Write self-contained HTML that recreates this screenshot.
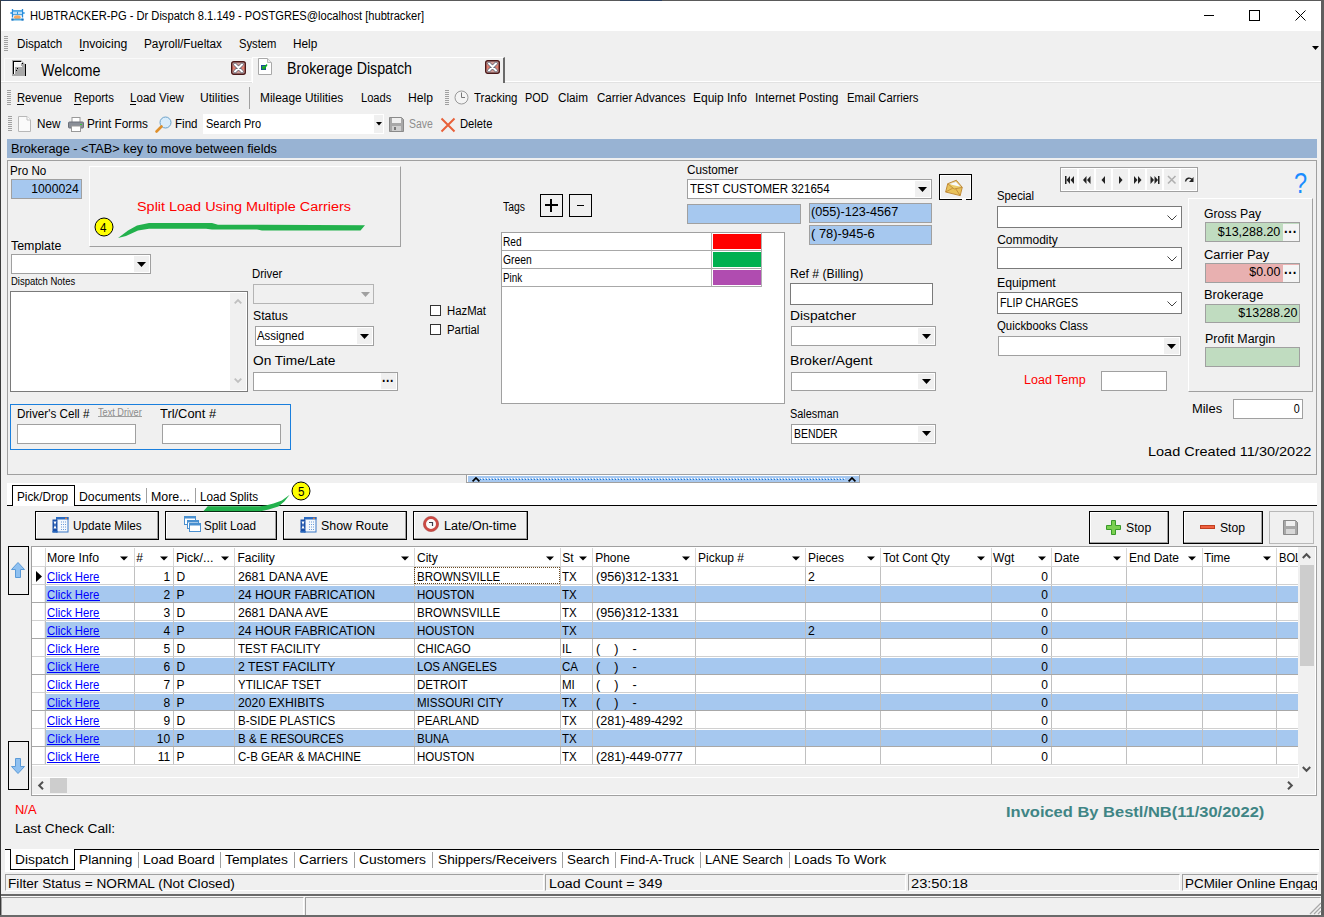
<!DOCTYPE html>
<html><head><meta charset="utf-8"><style>
html,body{margin:0;padding:0;}
body{width:1324px;height:917px;overflow:hidden;position:relative;background:#f0f0f0;font-family:"Liberation Sans",sans-serif;}
.a{position:absolute;}
.t{position:absolute;white-space:pre;}
svg{position:absolute;overflow:visible;}
</style></head><body>
<div class="a" style="left:0px;top:0px;width:1324px;height:31px;background:#ffffff;"></div>
<div class="a" style="left:0px;top:0px;width:1324px;height:1px;background:#5a5a5a;"></div>
<div class="a" style="left:0px;top:0px;width:40px;height:1px;background:#2a4060;"></div>
<div class="a" style="left:620px;top:0px;width:42px;height:1px;background:#2a4060;"></div>
<div class="a" style="left:0px;top:0px;width:1px;height:917px;background:#3a3a3a;"></div>
<div class="a" style="left:1321px;top:0px;width:3px;height:917px;background:#5f5f5f;"></div>
<svg style="left:10px;top:8px" width="15" height="14" viewBox="0 0 15 14"><path d="M2.5 1V9.5M12.5 1V9.5" stroke="#2a8ad8" stroke-width="1.3"/><path d="M3 2.2H12V3.8H3Z" fill="#2a96e0"/><path d="M3 3.8H12V6.2H3Z" fill="#bfe0f8"/><rect x="7" y="3.8" width="1" height="2.4" fill="#2a96e0"/><path d="M3 6.2H12V7.2H3Z" fill="#2a90d8"/><circle cx="1.2" cy="5" r="1" fill="#3aa0e8"/><circle cx="13.8" cy="5" r="1" fill="#3aa0e8"/><ellipse cx="7.3" cy="9.3" rx="3.4" ry="2" fill="#f6a860"/><rect x="1.5" y="10.6" width="12" height="1.9" fill="#4aa8e0"/><rect x="1.5" y="10.6" width="2" height="1.9" fill="#1a70c0"/><rect x="11.5" y="10.6" width="2" height="1.9" fill="#1a70c0"/></svg>
<div class="a" style="left:1204px;top:15px;width:10px;height:1px;background:#000;"></div>
<div class="a" style="left:1249px;top:10px;width:11px;height:11px;border:1px solid #000;box-sizing:border-box;"></div>
<svg style="left:1295px;top:10px" width="11" height="11" viewBox="0 0 11 11"><path d="M0.5 0.5L10.5 10.5M10.5 0.5L0.5 10.5" stroke="#000" stroke-width="1"/></svg>
<div class="a" style="left:4px;top:36px;width:4px;height:15px;background:repeating-linear-gradient(to bottom,#a0a0a0 0,#a0a0a0 1px,transparent 1px,transparent 2px);"></div>
<div class="a" style="left:80px;top:50px;width:4px;height:1px;background:#000;"></div>
<svg style="left:1312px;top:46px" width="7" height="4" viewBox="0 0 7 4"><path d="M0 0H7L3.5 4Z" fill="#000"/></svg>
<div class="a" style="left:4px;top:58px;width:248px;height:24px;background:#f0f0f0;border-top:1px solid #fafafa;border-left:1px solid #fafafa;border-right:1px solid #fafafa;box-sizing:border-box;"></div>
<svg style="left:12px;top:60px" width="15" height="16" viewBox="0 0 15 16"><path d="M0 0H9L14 5V16H0Z" fill="#a8a8a8"/><rect x="2" y="2" width="7" height="5" fill="#f4f4f4"/><rect x="2" y="2" width="1" height="12" fill="#fff"/><rect x="2" y="2" width="8" height="1" fill="#fff"/><rect x="1" y="1" width="1" height="13" fill="#000"/><rect x="1" y="1" width="8" height="1" fill="#000"/><rect x="13" y="4" width="1" height="12" fill="#000"/><rect x="5" y="8" width="1" height="1" fill="#000"/><rect x="4" y="10" width="1" height="1" fill="#000"/><rect x="10" y="3" width="1" height="1" fill="#000"/><rect x="9" y="6" width="1" height="1" fill="#fff"/></svg>
<svg style="left:231px;top:61px" width="15" height="14" viewBox="0 0 15 14"><defs><linearGradient id="cg" x1="0" y1="0" x2="0" y2="1"><stop offset="0" stop-color="#c9b0b0"/><stop offset="0.5" stop-color="#e07a6a"/><stop offset="1" stop-color="#c9b0b0"/></linearGradient></defs><rect x="0.7" y="0.7" width="13.6" height="12.6" rx="2" fill="url(#cg)" stroke="#4a1818" stroke-width="1.4"/><path d="M4 3.5L11 10.5M11 3.5L4 10.5" stroke="#606878" stroke-width="3.4" stroke-linecap="round"/><path d="M4 3.5L11 10.5M11 3.5L4 10.5" stroke="#fff" stroke-width="2" stroke-linecap="round"/></svg>
<div class="a" style="left:252px;top:57px;width:253px;height:26px;background:#f0f0f0;border-top:1px solid #fff;border-left:1px solid #fff;border-right:2px solid #6a6a6a;box-sizing:border-box;"></div>
<svg style="left:258px;top:58px" width="14" height="17" viewBox="0 0 14 17"><path d="M0.5 0.5H9.5L13.5 4.5V16.5H0.5Z" fill="#fff" stroke="#a8a8a8"/><path d="M9.5 0.5V4.5H13.5" fill="#e8e8e8" stroke="#b8b8b8"/><rect x="3" y="7" width="5" height="5" fill="#1a4a9a"/><rect x="4" y="8" width="3" height="3" fill="#2aa040"/><path d="M4.5 9.5L6 11L9 6.5" fill="none" stroke="#10b020" stroke-width="1.4"/></svg>
<svg style="left:485px;top:60px" width="15" height="14" viewBox="0 0 15 14"><defs><linearGradient id="cg" x1="0" y1="0" x2="0" y2="1"><stop offset="0" stop-color="#c9b0b0"/><stop offset="0.5" stop-color="#e07a6a"/><stop offset="1" stop-color="#c9b0b0"/></linearGradient></defs><rect x="0.7" y="0.7" width="13.6" height="12.6" rx="2" fill="url(#cg)" stroke="#4a1818" stroke-width="1.4"/><path d="M4 3.5L11 10.5M11 3.5L4 10.5" stroke="#606878" stroke-width="3.4" stroke-linecap="round"/><path d="M4 3.5L11 10.5M11 3.5L4 10.5" stroke="#fff" stroke-width="2" stroke-linecap="round"/></svg>
<div class="a" style="left:1px;top:81px;width:251px;height:1px;background:#ffffff;"></div>
<div class="a" style="left:1px;top:82px;width:251px;height:1px;background:#e2e2e2;"></div>
<div class="a" style="left:505px;top:81px;width:816px;height:1px;background:#ffffff;"></div>
<div class="a" style="left:505px;top:82px;width:816px;height:1px;background:#e2e2e2;"></div>
<div class="a" style="left:7px;top:90px;width:4px;height:16px;background:repeating-linear-gradient(to bottom,#a0a0a0 0,#a0a0a0 1px,transparent 1px,transparent 2px);"></div>
<div class="a" style="left:17px;top:104px;width:7px;height:1px;background:#000;"></div>
<div class="a" style="left:74px;top:104px;width:7px;height:1px;background:#000;"></div>
<div class="a" style="left:130px;top:104px;width:6px;height:1px;background:#000;"></div>
<div class="a" style="left:249px;top:87px;width:1px;height:22px;background:#a0a0a0;"></div>
<div class="a" style="left:445px;top:90px;width:4px;height:16px;background:repeating-linear-gradient(to bottom,#a0a0a0 0,#a0a0a0 1px,transparent 1px,transparent 2px);"></div>
<svg style="left:454px;top:90px" width="15" height="15" viewBox="0 0 15 15"><circle cx="7.5" cy="7.5" r="6.5" fill="#f4f4f4" stroke="#9a9a9a"/><path d="M7.5 2.5V7.5H11" stroke="#777" fill="none"/></svg>
<div class="a" style="left:8px;top:116px;width:4px;height:16px;background:repeating-linear-gradient(to bottom,#a0a0a0 0,#a0a0a0 1px,transparent 1px,transparent 2px);"></div>
<svg style="left:18px;top:116px" width="13" height="16" viewBox="0 0 13 16"><path d="M0.5 0.5H9L12.5 4V15.5H0.5Z" fill="#fafafa" stroke="#b8b8b8"/><path d="M9 0.5V4H12.5" fill="#fff" stroke="#c0c0c0"/></svg>
<svg style="left:68px;top:117px" width="16" height="15" viewBox="0 0 16 15"><rect x="4" y="0.5" width="8" height="5" fill="#fff" stroke="#999"/><rect x="0.5" y="5" width="15" height="6" rx="1" fill="#8a8f98" stroke="#6a6f78"/><rect x="3.5" y="9" width="9" height="5.5" fill="#fff" stroke="#999"/><rect x="12" y="7" width="2" height="1" fill="#3c3"/></svg>
<svg style="left:155px;top:116px" width="17" height="17" viewBox="0 0 17 17"><circle cx="10.5" cy="6.5" r="5.5" fill="#d8ecfb" stroke="#6aa0c8"/><path d="M6.5 10.5L1.5 15.5" stroke="#e0902a" stroke-width="2.6" stroke-linecap="round"/></svg>
<div class="a" style="left:203px;top:114px;width:181px;height:20px;background:#fff;"></div>
<div class="a" style="left:374px;top:115px;width:9px;height:18px;background:#f0f0f0;"></div>
<svg style="left:376px;top:122px" width="6" height="4" viewBox="0 0 6 4"><path d="M0 0H6L3 3.5Z" fill="#000"/></svg>
<svg style="left:389px;top:117px" width="15" height="15" viewBox="0 0 15 15"><path d="M0.5 0.5H12.5L14.5 2.5V14.5H0.5Z" fill="#a8a8a8" stroke="#8a8a8a"/><rect x="3" y="1" width="9" height="5" fill="#f0f0f0"/><rect x="3" y="9" width="9" height="5" fill="#d0d0d0"/><rect x="5" y="10" width="2" height="3" fill="#777"/></svg>
<svg style="left:440px;top:117px" width="16" height="16" viewBox="0 0 16 16"><path d="M1.5 1.5L14.5 14.5M14.5 1.5L1.5 14.5" stroke="#e8613a" stroke-width="2"/></svg>
<div class="a" style="left:7px;top:139px;width:1310px;height:19px;background:#98b3d3;"></div>
<div class="a" style="left:7px;top:160px;width:1310px;height:315px;border:1px solid #a0a0a0;box-sizing:border-box;"></div>
<div class="a" style="left:11px;top:179px;width:71px;height:20px;background:#a6c8ef;border:1px solid #a0a0a0;box-sizing:border-box;"></div>
<div class="a" style="left:89px;top:166px;width:312px;height:81px;border-top:1px solid #fff;border-left:1px solid #fff;border-right:1px solid #a0a0a0;border-bottom:1px solid #a0a0a0;box-sizing:border-box;"></div>
<svg style="left:0px;top:0px" width="1" height="1"><defs></defs></svg>
<svg style="left:0px;top:0px" width="1324" height="917" viewBox="0 0 1324 917"><path d="M118 238 L128 230.5 L137 225.5 L149 223 L212 223 L218 224.8 L262 224.8 L365 225.3 L360.5 230.6 L262 230.6 L257 229.6 L212 229.6 L206 228.8 L149 228.8 L138 230.6 L126 236 Z" fill="#22b14c"/></svg>
<svg style="left:93.6px;top:217.4px" width="20" height="20" viewBox="0 0 20 20"><circle cx="10" cy="10" r="9" fill="#ffff00" stroke="#000" stroke-width="1"/></svg>
<div class="a" style="left:11px;top:254px;width:140px;height:20px;background:#fff;border:1px solid #a0a0a0;box-sizing:border-box;"></div>
<div class="a" style="left:134px;top:256px;width:15px;height:16px;background:#f0f0f0;"></div>
<svg style="left:137.0px;top:261.5px" width="9" height="5" viewBox="0 0 9 5"><path d="M0 0H9L4.5 5Z" fill="#000"/></svg>
<div class="a" style="left:10px;top:291px;width:238px;height:101px;background:#fff;border:1px solid #7a7a7a;box-sizing:border-box;"></div>
<div class="a" style="left:230px;top:293px;width:16px;height:97px;background:#f0f0f0;"></div>
<svg style="left:233.5px;top:299px" width="8" height="5" viewBox="0 0 8 5"><path d="M0.7 4.3L4 1L7.3 4.3" fill="none" stroke="#c0c0c0" stroke-width="1.8"/></svg>
<svg style="left:233.5px;top:378px" width="8" height="5" viewBox="0 0 8 5"><path d="M0.7 0.7L4 4L7.3 0.7" fill="none" stroke="#c0c0c0" stroke-width="1.8"/></svg>
<div class="a" style="left:253px;top:284px;width:121px;height:20px;background:#f0f0f0;border:1px solid #b4b4b4;box-sizing:border-box;"></div>
<svg style="left:360.5px;top:291.5px" width="9" height="5" viewBox="0 0 9 5"><path d="M0 0H9L4.5 5Z" fill="#a0a0a0"/></svg>
<div class="a" style="left:255px;top:326px;width:119px;height:20px;background:#fff;border:1px solid #a0a0a0;box-sizing:border-box;"></div>
<div class="a" style="left:357px;top:328px;width:15px;height:16px;background:#f0f0f0;"></div>
<svg style="left:360.0px;top:333.5px" width="9" height="5" viewBox="0 0 9 5"><path d="M0 0H9L4.5 5Z" fill="#000"/></svg>
<div class="a" style="left:253px;top:372px;width:145px;height:19px;background:#fff;border:1px solid #a0a0a0;box-sizing:border-box;"></div>
<div class="a" style="left:381px;top:373px;width:15px;height:16px;background:#f0f0f0;"></div>
<div class="a" style="left:10px;top:404px;width:281px;height:46px;border:1px solid #1a7fdd;box-sizing:border-box;"></div>
<div class="a" style="left:98px;top:416px;width:44px;height:1px;background:#a0a0a0;"></div>
<div class="a" style="left:17px;top:424px;width:119px;height:20px;background:#fff;border:1px solid #a0a0a0;box-sizing:border-box;"></div>
<div class="a" style="left:162px;top:424px;width:119px;height:20px;background:#fff;border:1px solid #a0a0a0;box-sizing:border-box;"></div>
<div class="a" style="left:540px;top:194px;width:23px;height:23px;border:1px solid #000;box-sizing:border-box;"></div>
<div class="a" style="left:569px;top:194px;width:23px;height:23px;border:1px solid #000;box-sizing:border-box;"></div>
<div class="a" style="left:545px;top:204px;width:13px;height:2px;background:#000;"></div>
<div class="a" style="left:550px;top:199px;width:2px;height:13px;background:#000;"></div>
<div class="a" style="left:577px;top:205px;width:7px;height:1px;background:#000;"></div>
<div class="a" style="left:430px;top:305px;width:11px;height:11px;background:#fff;border:1px solid #333;box-sizing:border-box;"></div>
<div class="a" style="left:430px;top:324px;width:11px;height:11px;background:#fff;border:1px solid #333;box-sizing:border-box;"></div>
<div class="a" style="left:501px;top:232px;width:284px;height:172px;background:#fff;border:1px solid #a0a0a0;box-sizing:border-box;"></div>
<div class="a" style="left:502px;top:250px;width:260px;height:1px;background:#a8a8a8;"></div>
<div class="a" style="left:711px;top:232px;width:1px;height:18px;background:#b0b0b0;"></div>
<div class="a" style="left:761px;top:232px;width:1px;height:19px;background:#b0b0b0;"></div>
<div class="a" style="left:713px;top:234px;width:48px;height:15px;background:#ff0000;"></div>
<div class="a" style="left:502px;top:268px;width:260px;height:1px;background:#a8a8a8;"></div>
<div class="a" style="left:711px;top:250px;width:1px;height:18px;background:#b0b0b0;"></div>
<div class="a" style="left:761px;top:250px;width:1px;height:19px;background:#b0b0b0;"></div>
<div class="a" style="left:713px;top:252px;width:48px;height:15px;background:#00b050;"></div>
<div class="a" style="left:502px;top:286px;width:260px;height:1px;background:#a8a8a8;"></div>
<div class="a" style="left:711px;top:268px;width:1px;height:18px;background:#b0b0b0;"></div>
<div class="a" style="left:761px;top:268px;width:1px;height:19px;background:#b0b0b0;"></div>
<div class="a" style="left:713px;top:270px;width:48px;height:15px;background:#b04cb0;"></div>
<div class="a" style="left:687px;top:179px;width:245px;height:20px;background:#fff;border:1px solid #a0a0a0;box-sizing:border-box;"></div>
<div class="a" style="left:915px;top:181px;width:15px;height:16px;background:#f0f0f0;"></div>
<svg style="left:918.0px;top:186.5px" width="9" height="5" viewBox="0 0 9 5"><path d="M0 0H9L4.5 5Z" fill="#000"/></svg>
<div class="a" style="left:687px;top:204px;width:114px;height:20px;background:#a6c8ef;border:1px solid #a0a0a0;box-sizing:border-box;"></div>
<div class="a" style="left:809px;top:203px;width:123px;height:20px;background:#a6c8ef;border:1px solid #a0a0a0;box-sizing:border-box;"></div>
<div class="a" style="left:809px;top:225px;width:123px;height:20px;background:#a6c8ef;border:1px solid #a0a0a0;box-sizing:border-box;"></div>
<div class="a" style="left:939px;top:174px;width:33px;height:26px;border:1px solid #000;box-sizing:border-box;box-shadow:inset 1px 1px 0 #fff, inset -1px -1px 0 #fff;"></div>
<div class="a" style="left:962px;top:199px;width:4px;height:1px;background:#f0f0f0;"></div>
<svg style="left:945px;top:178px" width="19" height="19" viewBox="0 0 19 19"><g transform="rotate(14 9.5 9.5)"><path d="M2 7.5L9.5 2L17 7.5V16H2Z" fill="#e8c25a" stroke="#c08a38" stroke-width="0.9"/><path d="M4 7L9.5 3.5L15 7L9.5 10Z" fill="#fafafa" stroke="#d8d8d8" stroke-width="0.5"/><path d="M2 7.5L9.5 11L17 7.5" fill="#eccd6a" stroke="#c08a38" stroke-width="0.8"/><path d="M2 16L8 10.5M17 16L11 10.5" fill="none" stroke="#c08a38" stroke-width="0.8"/></g></svg>
<div class="a" style="left:790px;top:283px;width:143px;height:22px;background:#fff;border:1px solid #7a7a7a;box-sizing:border-box;"></div>
<div class="a" style="left:791px;top:326px;width:145px;height:20px;background:#fff;border:1px solid #a0a0a0;box-sizing:border-box;"></div>
<div class="a" style="left:918px;top:328px;width:16px;height:16px;background:#f0f0f0;"></div>
<svg style="left:921.5px;top:333.5px" width="9" height="5" viewBox="0 0 9 5"><path d="M0 0H9L4.5 5Z" fill="#000"/></svg>
<div class="a" style="left:791px;top:372px;width:145px;height:19px;background:#fff;border:1px solid #a0a0a0;box-sizing:border-box;"></div>
<div class="a" style="left:918px;top:374px;width:16px;height:15px;background:#f0f0f0;"></div>
<svg style="left:921.5px;top:378.8px" width="9" height="5" viewBox="0 0 9 5"><path d="M0 0H9L4.5 5Z" fill="#000"/></svg>
<div class="a" style="left:791px;top:424px;width:145px;height:20px;background:#fff;border:1px solid #a0a0a0;box-sizing:border-box;"></div>
<div class="a" style="left:918px;top:426px;width:16px;height:16px;background:#f0f0f0;"></div>
<svg style="left:921.5px;top:431.2px" width="9" height="5" viewBox="0 0 9 5"><path d="M0 0H9L4.5 5Z" fill="#000"/></svg>
<div class="a" style="left:1060px;top:167px;width:138px;height:25px;background:#fff;border:1px solid #a0a0a0;box-sizing:border-box;"></div>
<div class="a" style="left:1062px;top:169px;width:15px;height:21px;background:#f0f0f0;"></div>
<div class="a" style="left:1079px;top:169px;width:15px;height:21px;background:#f0f0f0;"></div>
<div class="a" style="left:1096px;top:169px;width:15px;height:21px;background:#f0f0f0;"></div>
<div class="a" style="left:1113px;top:169px;width:15px;height:21px;background:#f0f0f0;"></div>
<div class="a" style="left:1130px;top:169px;width:15px;height:21px;background:#f0f0f0;"></div>
<div class="a" style="left:1147px;top:169px;width:15px;height:21px;background:#f0f0f0;"></div>
<div class="a" style="left:1164px;top:169px;width:15px;height:21px;background:#f0f0f0;"></div>
<div class="a" style="left:1181px;top:169px;width:15px;height:21px;background:#f0f0f0;"></div>
<svg style="left:1064.7px;top:174.5px" width="10" height="10" viewBox="0 0 10 10"><rect x="0" y="1" width="1.5" height="8" fill="#222"/><path d="M5 1V9L1.5 5Z M9 1V9L5.5 5Z" fill="#222"/></svg>
<svg style="left:1081.8px;top:174.5px" width="10" height="10" viewBox="0 0 10 10"><path d="M4.5 1V9L1 5Z M8.5 1V9L5 5Z" fill="#222"/></svg>
<svg style="left:1098.9px;top:174.5px" width="10" height="10" viewBox="0 0 10 10"><path d="M6 1V9L2.5 5Z" fill="#222"/></svg>
<svg style="left:1115.8px;top:174.5px" width="10" height="10" viewBox="0 0 10 10"><path d="M3 1V9L6.5 5Z" fill="#222"/></svg>
<svg style="left:1132.8px;top:174.5px" width="10" height="10" viewBox="0 0 10 10"><path d="M1 1V9L4.5 5Z M5 1V9L8.5 5Z" fill="#222"/></svg>
<svg style="left:1149.7px;top:174.5px" width="10" height="10" viewBox="0 0 10 10"><path d="M0.5 1V9L4 5Z M4.5 1V9L8 5Z" fill="#222"/><rect x="8" y="1" width="1.5" height="8" fill="#222"/></svg>
<svg style="left:1167.2px;top:174.5px" width="10" height="10" viewBox="0 0 10 10"><path d="M1 1L8.5 8.5M8.5 1L1 8.5" stroke="#b0b0b0" stroke-width="1.6"/></svg>
<svg style="left:1183.9px;top:174.5px" width="10" height="10" viewBox="0 0 10 10"><path d="M1.5 6.5C2 3 6 2 8 4.5" fill="none" stroke="#222" stroke-width="1.4"/><path d="M9.5 2V7H5Z" fill="#222"/></svg>
<div class="a" style="left:997px;top:206px;width:185px;height:22px;background:#fff;border:1px solid #7a7a7a;box-sizing:border-box;"></div>
<svg style="left:1167.0px;top:214.5px" width="10" height="6" viewBox="0 0 10 6"><path d="M0.5 0.5L5 5L9.5 0.5" fill="none" stroke="#444" stroke-width="1"/></svg>
<div class="a" style="left:997px;top:247px;width:185px;height:22px;background:#fff;border:1px solid #7a7a7a;box-sizing:border-box;"></div>
<svg style="left:1167.0px;top:255.5px" width="10" height="6" viewBox="0 0 10 6"><path d="M0.5 0.5L5 5L9.5 0.5" fill="none" stroke="#444" stroke-width="1"/></svg>
<div class="a" style="left:997px;top:292px;width:185px;height:22px;background:#fff;border:1px solid #7a7a7a;box-sizing:border-box;"></div>
<svg style="left:1167.0px;top:300.5px" width="10" height="6" viewBox="0 0 10 6"><path d="M0.5 0.5L5 5L9.5 0.5" fill="none" stroke="#444" stroke-width="1"/></svg>
<div class="a" style="left:998px;top:336px;width:183px;height:20px;background:#fff;border:1px solid #a0a0a0;box-sizing:border-box;"></div>
<div class="a" style="left:1164px;top:338px;width:15px;height:16px;background:#f0f0f0;"></div>
<svg style="left:1167.0px;top:343.5px" width="9" height="5" viewBox="0 0 9 5"><path d="M0 0H9L4.5 5Z" fill="#000"/></svg>
<div class="a" style="left:1101px;top:371px;width:66px;height:20px;background:#fff;border:1px solid #a0a0a0;box-sizing:border-box;"></div>
<div class="a" style="left:1188px;top:198px;width:125px;height:194px;border-top:1px solid #fff;border-left:1px solid #fff;border-right:1px solid #a0a0a0;border-bottom:1px solid #a0a0a0;box-sizing:border-box;"></div>
<div class="a" style="left:1205px;top:222px;width:95px;height:20px;background:#c0dcc0;border:1px solid #a0a0a0;box-sizing:border-box;"></div>
<div class="a" style="left:1283px;top:224px;width:16px;height:17px;background:#f4f4f4;"></div>
<div class="a" style="left:1205px;top:263px;width:95px;height:20px;background:#e8b0b0;border:1px solid #a0a0a0;box-sizing:border-box;"></div>
<div class="a" style="left:1283px;top:265px;width:16px;height:17px;background:#f4f4f4;"></div>
<div class="a" style="left:1205px;top:304px;width:95px;height:19px;background:#c0dcc0;border:1px solid #a0a0a0;box-sizing:border-box;"></div>
<div class="a" style="left:1205px;top:347px;width:95px;height:20px;background:#c0dcc0;border:1px solid #a0a0a0;box-sizing:border-box;"></div>
<div class="a" style="left:1233px;top:399px;width:70px;height:20px;background:#fff;border:1px solid #a0a0a0;box-sizing:border-box;"></div>
<div class="a" style="left:466px;top:474px;width:394px;height:9px;background:#a0a0a0;"></div>
<div class="a" style="left:467px;top:475px;width:392px;height:7px;background:#fff;"></div>
<div class="a" style="left:468px;top:476px;width:391px;height:6px;background:#a6c8f0;"></div>
<div class="a" style="left:480px;top:479px;width:365px;height:1px;background:repeating-linear-gradient(to right,#1878d8 0,#1878d8 1px,transparent 1px,transparent 3px);"></div>
<div class="a" style="left:481px;top:478px;width:364px;height:1px;background:repeating-linear-gradient(to right,#ffffff 0,#ffffff 1px,transparent 1px,transparent 3px);"></div>
<svg style="left:471.5px;top:477px" width="8" height="5" viewBox="0 0 8 5"><path d="M0.6 4.4L4 1L7.4 4.4" fill="none" stroke="#000" stroke-width="1.7"/></svg>
<svg style="left:847.5px;top:477px" width="8" height="5" viewBox="0 0 8 5"><path d="M0.6 4.4L4 1L7.4 4.4" fill="none" stroke="#000" stroke-width="1.7"/></svg>
<div class="a" style="left:7px;top:483px;width:1310px;height:23px;background:#fff;"></div>
<div class="a" style="left:7px;top:505px;width:6px;height:1px;background:#000;"></div>
<div class="a" style="left:74px;top:505px;width:1243px;height:1px;background:#000;"></div>
<div class="a" style="left:12px;top:485px;width:63px;height:21px;background:#fff;border-left:1px solid #000;border-top:1px solid #000;border-right:1px solid #000;box-sizing:border-box;"></div>
<div class="a" style="left:146px;top:488px;width:1px;height:15px;background:#a0a0a0;"></div>
<div class="a" style="left:195px;top:488px;width:1px;height:15px;background:#a0a0a0;"></div>
<svg style="left:291px;top:481.3px" width="20" height="20" viewBox="0 0 20 20"><circle cx="10" cy="10" r="9" fill="#ffff00" stroke="#000" stroke-width="1"/></svg>
<div class="a" style="left:35px;top:511px;width:124px;height:29px;background:#f0f0f0;border:1px solid #000;box-sizing:border-box;box-shadow:inset -1px -1px 0 #a0a0a0, inset 1px 1px 0 #fff;"></div>
<svg style="left:52px;top:517px" width="17" height="16" viewBox="0 0 17 16"><rect x="4.5" y="0.5" width="11.5" height="14.5" fill="#f4f8fc" stroke="#3a78c8"/><rect x="4" y="0" width="12.5" height="2.5" fill="#2a6ac0"/><rect x="13" y="0.7" width="2" height="1.2" fill="#f08030"/><path d="M9 5H14M9 7.5H14M9 10H14M9 12.5H14" stroke="#6a9ad8" stroke-dasharray="1 1"/><path d="M0.5 2.5H5.5V15.5H0.5Z" fill="#1a50a8"/><path d="M1.5 4.5H4.5L3 8L4.5 11.5H1.5L3 8Z" fill="#fff"/><rect x="0.5" y="14" width="5" height="1.5" fill="#2a6ac0"/></svg>
<div class="a" style="left:165px;top:511px;width:112px;height:29px;background:#f0f0f0;border:1px solid #000;box-sizing:border-box;box-shadow:inset -1px -1px 0 #a0a0a0, inset 1px 1px 0 #fff;"></div>
<svg style="left:184px;top:516px" width="17" height="16" viewBox="0 0 17 16"><rect x="0.5" y="0.5" width="11" height="8" fill="#fff" stroke="#4a90d0"/><rect x="0.5" y="0.5" width="11" height="2" fill="#4a90d0"/><rect x="3.5" y="4.5" width="11" height="8" fill="#fff" stroke="#4a90d0"/><rect x="3.5" y="4.5" width="11" height="2" fill="#4a90d0"/><rect x="5.5" y="7.5" width="11" height="8" fill="#fff" stroke="#4a90d0"/><rect x="5.5" y="7.5" width="11" height="2" fill="#4a90d0"/></svg>
<div class="a" style="left:283px;top:511px;width:124px;height:29px;background:#f0f0f0;border:1px solid #000;box-sizing:border-box;box-shadow:inset -1px -1px 0 #a0a0a0, inset 1px 1px 0 #fff;"></div>
<svg style="left:300px;top:517px" width="17" height="16" viewBox="0 0 17 16"><rect x="4.5" y="0.5" width="11.5" height="14.5" fill="#f4f8fc" stroke="#3a78c8"/><rect x="4" y="0" width="12.5" height="2.5" fill="#2a6ac0"/><rect x="13" y="0.7" width="2" height="1.2" fill="#f08030"/><path d="M9 5H14M9 7.5H14M9 10H14M9 12.5H14" stroke="#6a9ad8" stroke-dasharray="1 1"/><path d="M0.5 2.5H5.5V15.5H0.5Z" fill="#1a50a8"/><path d="M1.5 4.5H4.5L3 8L4.5 11.5H1.5L3 8Z" fill="#fff"/><rect x="0.5" y="14" width="5" height="1.5" fill="#2a6ac0"/></svg>
<div class="a" style="left:413px;top:511px;width:115px;height:29px;background:#f0f0f0;border:1px solid #000;box-sizing:border-box;box-shadow:inset -1px -1px 0 #a0a0a0, inset 1px 1px 0 #fff;"></div>
<svg style="left:423px;top:516px" width="16" height="16" viewBox="0 0 16 16"><circle cx="8" cy="8" r="6.3" fill="#fafafa" stroke="#cc4a44" stroke-width="2.6"/><circle cx="8" cy="8" r="7.6" fill="none" stroke="#a83a38" stroke-width="0.6"/><path d="M6 6.5H9.5V10" fill="none" stroke="#3a3a4a" stroke-width="1.2"/></svg>
<div class="a" style="left:1089px;top:511px;width:80px;height:33px;background:#f0f0f0;border:1px solid #000;box-sizing:border-box;box-shadow:inset -1px -1px 0 #a0a0a0, inset 1px 1px 0 #fff;"></div>
<svg style="left:1106px;top:520px" width="15" height="15" viewBox="0 0 15 15"><path d="M5.5 0.5H9.5V5.5H14.5V9.5H9.5V14.5H5.5V9.5H0.5V5.5H5.5Z" fill="#7ad050" stroke="#3a9a2a"/></svg>
<div class="a" style="left:1183px;top:511px;width:80px;height:33px;background:#f0f0f0;border:1px solid #000;box-sizing:border-box;box-shadow:inset -1px -1px 0 #a0a0a0, inset 1px 1px 0 #fff;"></div>
<div class="a" style="left:1200px;top:525px;width:15px;height:4px;background:#f06040;border:1px solid #c04020;box-sizing:border-box;"></div>
<div class="a" style="left:1269px;top:511px;width:45px;height:33px;background:#f0f0f0;border:1px solid #b8b8b8;box-sizing:border-box;"></div>
<svg style="left:1283px;top:520px" width="15" height="15" viewBox="0 0 15 15"><path d="M0.5 0.5H12.5L14.5 2.5V14.5H0.5Z" fill="#a8a8a8" stroke="#8a8a8a"/><rect x="3" y="1" width="9" height="5" fill="#f0f0f0"/><rect x="3" y="9" width="9" height="5" fill="#d8d8d8"/></svg>
<svg style="left:0px;top:0px" width="1324" height="917" viewBox="0 0 1324 917"><path d="M289.7 494.7 L281.8 500.6 L273.5 503.6 L265.6 505.5 L260 506.3 L207.7 506.3 L203.3 511.3 L260.7 511.3 L268.6 509.5 L278.4 506.5 L284.3 501.6 Z" fill="#22b14c"/></svg>
<div class="a" style="left:8px;top:546px;width:21px;height:49px;background:#f0f0f0;border:1px solid #000;box-sizing:border-box;"></div>
<svg style="left:11px;top:562px" width="14" height="16" viewBox="0 0 14 16"><path d="M7 0.5L13.5 7.5H9.5V15.5H4.5V7.5H0.5Z" fill="#8ec0f0" stroke="#5a9ad8"/></svg>
<div class="a" style="left:8px;top:741px;width:21px;height:49px;background:#f0f0f0;border:1px solid #000;box-sizing:border-box;"></div>
<svg style="left:11px;top:758px" width="14" height="16" viewBox="0 0 14 16"><path d="M7 15.5L13.5 8.5H9.5V0.5H4.5V8.5H0.5Z" fill="#8ec0f0" stroke="#5a9ad8"/></svg>
<div class="a" style="left:31px;top:546px;width:1286px;height:250px;background:#f0f0f0;border:1px solid #a0a0a0;box-sizing:border-box;"></div>
<div class="a" style="left:32px;top:547px;width:1266px;height:19px;background:#fff;"></div>
<div class="a" style="left:32px;top:566px;width:1266px;height:1px;background:#d4d4d4;"></div>
<div class="a" style="left:45px;top:548px;width:1px;height:18px;background:#d8d8d8;"></div>
<div class="a" style="left:134px;top:548px;width:1px;height:18px;background:#d8d8d8;"></div>
<div class="a" style="left:173px;top:548px;width:1px;height:18px;background:#d8d8d8;"></div>
<div class="a" style="left:234px;top:548px;width:1px;height:18px;background:#d8d8d8;"></div>
<div class="a" style="left:414px;top:548px;width:1px;height:18px;background:#d8d8d8;"></div>
<div class="a" style="left:560px;top:548px;width:1px;height:18px;background:#d8d8d8;"></div>
<div class="a" style="left:592px;top:548px;width:1px;height:18px;background:#d8d8d8;"></div>
<div class="a" style="left:695px;top:548px;width:1px;height:18px;background:#d8d8d8;"></div>
<div class="a" style="left:805px;top:548px;width:1px;height:18px;background:#d8d8d8;"></div>
<div class="a" style="left:880px;top:548px;width:1px;height:18px;background:#d8d8d8;"></div>
<div class="a" style="left:991px;top:548px;width:1px;height:18px;background:#d8d8d8;"></div>
<div class="a" style="left:1051px;top:548px;width:1px;height:18px;background:#d8d8d8;"></div>
<div class="a" style="left:1126px;top:548px;width:1px;height:18px;background:#d8d8d8;"></div>
<div class="a" style="left:1202px;top:548px;width:1px;height:18px;background:#d8d8d8;"></div>
<div class="a" style="left:1276px;top:548px;width:1px;height:18px;background:#d8d8d8;"></div>
<svg style="left:120px;top:556px" width="8" height="5" viewBox="0 0 8 5"><path d="M0 0.5H8L4 4.5Z" fill="#000"/></svg>
<svg style="left:160px;top:556px" width="8" height="5" viewBox="0 0 8 5"><path d="M0 0.5H8L4 4.5Z" fill="#000"/></svg>
<svg style="left:221px;top:556px" width="8" height="5" viewBox="0 0 8 5"><path d="M0 0.5H8L4 4.5Z" fill="#000"/></svg>
<svg style="left:401px;top:556px" width="8" height="5" viewBox="0 0 8 5"><path d="M0 0.5H8L4 4.5Z" fill="#000"/></svg>
<svg style="left:546px;top:556px" width="8" height="5" viewBox="0 0 8 5"><path d="M0 0.5H8L4 4.5Z" fill="#000"/></svg>
<svg style="left:579px;top:556px" width="8" height="5" viewBox="0 0 8 5"><path d="M0 0.5H8L4 4.5Z" fill="#000"/></svg>
<svg style="left:682px;top:556px" width="8" height="5" viewBox="0 0 8 5"><path d="M0 0.5H8L4 4.5Z" fill="#000"/></svg>
<svg style="left:792px;top:556px" width="8" height="5" viewBox="0 0 8 5"><path d="M0 0.5H8L4 4.5Z" fill="#000"/></svg>
<svg style="left:867px;top:556px" width="8" height="5" viewBox="0 0 8 5"><path d="M0 0.5H8L4 4.5Z" fill="#000"/></svg>
<svg style="left:977px;top:556px" width="8" height="5" viewBox="0 0 8 5"><path d="M0 0.5H8L4 4.5Z" fill="#000"/></svg>
<svg style="left:1038px;top:556px" width="8" height="5" viewBox="0 0 8 5"><path d="M0 0.5H8L4 4.5Z" fill="#000"/></svg>
<svg style="left:1113px;top:556px" width="8" height="5" viewBox="0 0 8 5"><path d="M0 0.5H8L4 4.5Z" fill="#000"/></svg>
<svg style="left:1188px;top:556px" width="8" height="5" viewBox="0 0 8 5"><path d="M0 0.5H8L4 4.5Z" fill="#000"/></svg>
<svg style="left:1263px;top:556px" width="8" height="5" viewBox="0 0 8 5"><path d="M0 0.5H8L4 4.5Z" fill="#000"/></svg>
<div class="a" style="left:32px;top:567px;width:12px;height:18px;background:#fff;"></div>
<div class="a" style="left:45px;top:567px;width:1253px;height:17px;background:#fff;"></div>
<div class="a" style="left:32px;top:584px;width:1266px;height:1px;background:#d0d0d0;"></div>
<div class="a" style="left:45px;top:567px;width:1px;height:17px;background:#c0c0c0;"></div>
<div class="a" style="left:134px;top:567px;width:1px;height:17px;background:#c0c0c0;"></div>
<div class="a" style="left:173px;top:567px;width:1px;height:17px;background:#c0c0c0;"></div>
<div class="a" style="left:234px;top:567px;width:1px;height:17px;background:#c0c0c0;"></div>
<div class="a" style="left:414px;top:567px;width:1px;height:17px;background:#c0c0c0;"></div>
<div class="a" style="left:560px;top:567px;width:1px;height:17px;background:#c0c0c0;"></div>
<div class="a" style="left:592px;top:567px;width:1px;height:17px;background:#c0c0c0;"></div>
<div class="a" style="left:695px;top:567px;width:1px;height:17px;background:#c0c0c0;"></div>
<div class="a" style="left:805px;top:567px;width:1px;height:17px;background:#c0c0c0;"></div>
<div class="a" style="left:880px;top:567px;width:1px;height:17px;background:#c0c0c0;"></div>
<div class="a" style="left:991px;top:567px;width:1px;height:17px;background:#c0c0c0;"></div>
<div class="a" style="left:1051px;top:567px;width:1px;height:17px;background:#c0c0c0;"></div>
<div class="a" style="left:1126px;top:567px;width:1px;height:17px;background:#c0c0c0;"></div>
<div class="a" style="left:1202px;top:567px;width:1px;height:17px;background:#c0c0c0;"></div>
<div class="a" style="left:1276px;top:567px;width:1px;height:17px;background:#c0c0c0;"></div>
<div class="a" style="left:47px;top:582px;width:53px;height:1px;background:#0000ff;"></div>
<div class="a" style="left:32px;top:585px;width:12px;height:18px;background:#fff;"></div>
<div class="a" style="left:45px;top:585px;width:1253px;height:17px;background:#fff;"></div>
<div class="a" style="left:45px;top:586px;width:1253px;height:16px;background:#a6c8ef;"></div>
<div class="a" style="left:32px;top:602px;width:1266px;height:1px;background:#a8a8a8;"></div>
<div class="a" style="left:45px;top:585px;width:1px;height:17px;background:#c0c0c0;"></div>
<div class="a" style="left:134px;top:585px;width:1px;height:17px;background:#c0c0c0;"></div>
<div class="a" style="left:173px;top:585px;width:1px;height:17px;background:#c0c0c0;"></div>
<div class="a" style="left:234px;top:585px;width:1px;height:17px;background:#c0c0c0;"></div>
<div class="a" style="left:414px;top:585px;width:1px;height:17px;background:#c0c0c0;"></div>
<div class="a" style="left:560px;top:585px;width:1px;height:17px;background:#c0c0c0;"></div>
<div class="a" style="left:592px;top:585px;width:1px;height:17px;background:#c0c0c0;"></div>
<div class="a" style="left:695px;top:585px;width:1px;height:17px;background:#c0c0c0;"></div>
<div class="a" style="left:805px;top:585px;width:1px;height:17px;background:#c0c0c0;"></div>
<div class="a" style="left:880px;top:585px;width:1px;height:17px;background:#c0c0c0;"></div>
<div class="a" style="left:991px;top:585px;width:1px;height:17px;background:#c0c0c0;"></div>
<div class="a" style="left:1051px;top:585px;width:1px;height:17px;background:#c0c0c0;"></div>
<div class="a" style="left:1126px;top:585px;width:1px;height:17px;background:#c0c0c0;"></div>
<div class="a" style="left:1202px;top:585px;width:1px;height:17px;background:#c0c0c0;"></div>
<div class="a" style="left:1276px;top:585px;width:1px;height:17px;background:#c0c0c0;"></div>
<div class="a" style="left:47px;top:600px;width:53px;height:1px;background:#0000ff;"></div>
<div class="a" style="left:32px;top:603px;width:12px;height:18px;background:#fff;"></div>
<div class="a" style="left:45px;top:603px;width:1253px;height:17px;background:#fff;"></div>
<div class="a" style="left:32px;top:620px;width:1266px;height:1px;background:#d0d0d0;"></div>
<div class="a" style="left:45px;top:603px;width:1px;height:17px;background:#c0c0c0;"></div>
<div class="a" style="left:134px;top:603px;width:1px;height:17px;background:#c0c0c0;"></div>
<div class="a" style="left:173px;top:603px;width:1px;height:17px;background:#c0c0c0;"></div>
<div class="a" style="left:234px;top:603px;width:1px;height:17px;background:#c0c0c0;"></div>
<div class="a" style="left:414px;top:603px;width:1px;height:17px;background:#c0c0c0;"></div>
<div class="a" style="left:560px;top:603px;width:1px;height:17px;background:#c0c0c0;"></div>
<div class="a" style="left:592px;top:603px;width:1px;height:17px;background:#c0c0c0;"></div>
<div class="a" style="left:695px;top:603px;width:1px;height:17px;background:#c0c0c0;"></div>
<div class="a" style="left:805px;top:603px;width:1px;height:17px;background:#c0c0c0;"></div>
<div class="a" style="left:880px;top:603px;width:1px;height:17px;background:#c0c0c0;"></div>
<div class="a" style="left:991px;top:603px;width:1px;height:17px;background:#c0c0c0;"></div>
<div class="a" style="left:1051px;top:603px;width:1px;height:17px;background:#c0c0c0;"></div>
<div class="a" style="left:1126px;top:603px;width:1px;height:17px;background:#c0c0c0;"></div>
<div class="a" style="left:1202px;top:603px;width:1px;height:17px;background:#c0c0c0;"></div>
<div class="a" style="left:1276px;top:603px;width:1px;height:17px;background:#c0c0c0;"></div>
<div class="a" style="left:47px;top:618px;width:53px;height:1px;background:#0000ff;"></div>
<div class="a" style="left:32px;top:621px;width:12px;height:18px;background:#fff;"></div>
<div class="a" style="left:45px;top:621px;width:1253px;height:17px;background:#fff;"></div>
<div class="a" style="left:45px;top:622px;width:1253px;height:16px;background:#a6c8ef;"></div>
<div class="a" style="left:32px;top:638px;width:1266px;height:1px;background:#a8a8a8;"></div>
<div class="a" style="left:45px;top:621px;width:1px;height:17px;background:#c0c0c0;"></div>
<div class="a" style="left:134px;top:621px;width:1px;height:17px;background:#c0c0c0;"></div>
<div class="a" style="left:173px;top:621px;width:1px;height:17px;background:#c0c0c0;"></div>
<div class="a" style="left:234px;top:621px;width:1px;height:17px;background:#c0c0c0;"></div>
<div class="a" style="left:414px;top:621px;width:1px;height:17px;background:#c0c0c0;"></div>
<div class="a" style="left:560px;top:621px;width:1px;height:17px;background:#c0c0c0;"></div>
<div class="a" style="left:592px;top:621px;width:1px;height:17px;background:#c0c0c0;"></div>
<div class="a" style="left:695px;top:621px;width:1px;height:17px;background:#c0c0c0;"></div>
<div class="a" style="left:805px;top:621px;width:1px;height:17px;background:#c0c0c0;"></div>
<div class="a" style="left:880px;top:621px;width:1px;height:17px;background:#c0c0c0;"></div>
<div class="a" style="left:991px;top:621px;width:1px;height:17px;background:#c0c0c0;"></div>
<div class="a" style="left:1051px;top:621px;width:1px;height:17px;background:#c0c0c0;"></div>
<div class="a" style="left:1126px;top:621px;width:1px;height:17px;background:#c0c0c0;"></div>
<div class="a" style="left:1202px;top:621px;width:1px;height:17px;background:#c0c0c0;"></div>
<div class="a" style="left:1276px;top:621px;width:1px;height:17px;background:#c0c0c0;"></div>
<div class="a" style="left:47px;top:636px;width:53px;height:1px;background:#0000ff;"></div>
<div class="a" style="left:32px;top:639px;width:12px;height:18px;background:#fff;"></div>
<div class="a" style="left:45px;top:639px;width:1253px;height:17px;background:#fff;"></div>
<div class="a" style="left:32px;top:656px;width:1266px;height:1px;background:#d0d0d0;"></div>
<div class="a" style="left:45px;top:639px;width:1px;height:17px;background:#c0c0c0;"></div>
<div class="a" style="left:134px;top:639px;width:1px;height:17px;background:#c0c0c0;"></div>
<div class="a" style="left:173px;top:639px;width:1px;height:17px;background:#c0c0c0;"></div>
<div class="a" style="left:234px;top:639px;width:1px;height:17px;background:#c0c0c0;"></div>
<div class="a" style="left:414px;top:639px;width:1px;height:17px;background:#c0c0c0;"></div>
<div class="a" style="left:560px;top:639px;width:1px;height:17px;background:#c0c0c0;"></div>
<div class="a" style="left:592px;top:639px;width:1px;height:17px;background:#c0c0c0;"></div>
<div class="a" style="left:695px;top:639px;width:1px;height:17px;background:#c0c0c0;"></div>
<div class="a" style="left:805px;top:639px;width:1px;height:17px;background:#c0c0c0;"></div>
<div class="a" style="left:880px;top:639px;width:1px;height:17px;background:#c0c0c0;"></div>
<div class="a" style="left:991px;top:639px;width:1px;height:17px;background:#c0c0c0;"></div>
<div class="a" style="left:1051px;top:639px;width:1px;height:17px;background:#c0c0c0;"></div>
<div class="a" style="left:1126px;top:639px;width:1px;height:17px;background:#c0c0c0;"></div>
<div class="a" style="left:1202px;top:639px;width:1px;height:17px;background:#c0c0c0;"></div>
<div class="a" style="left:1276px;top:639px;width:1px;height:17px;background:#c0c0c0;"></div>
<div class="a" style="left:47px;top:654px;width:53px;height:1px;background:#0000ff;"></div>
<div class="a" style="left:32px;top:657px;width:12px;height:18px;background:#fff;"></div>
<div class="a" style="left:45px;top:657px;width:1253px;height:17px;background:#fff;"></div>
<div class="a" style="left:45px;top:658px;width:1253px;height:16px;background:#a6c8ef;"></div>
<div class="a" style="left:32px;top:674px;width:1266px;height:1px;background:#a8a8a8;"></div>
<div class="a" style="left:45px;top:657px;width:1px;height:17px;background:#c0c0c0;"></div>
<div class="a" style="left:134px;top:657px;width:1px;height:17px;background:#c0c0c0;"></div>
<div class="a" style="left:173px;top:657px;width:1px;height:17px;background:#c0c0c0;"></div>
<div class="a" style="left:234px;top:657px;width:1px;height:17px;background:#c0c0c0;"></div>
<div class="a" style="left:414px;top:657px;width:1px;height:17px;background:#c0c0c0;"></div>
<div class="a" style="left:560px;top:657px;width:1px;height:17px;background:#c0c0c0;"></div>
<div class="a" style="left:592px;top:657px;width:1px;height:17px;background:#c0c0c0;"></div>
<div class="a" style="left:695px;top:657px;width:1px;height:17px;background:#c0c0c0;"></div>
<div class="a" style="left:805px;top:657px;width:1px;height:17px;background:#c0c0c0;"></div>
<div class="a" style="left:880px;top:657px;width:1px;height:17px;background:#c0c0c0;"></div>
<div class="a" style="left:991px;top:657px;width:1px;height:17px;background:#c0c0c0;"></div>
<div class="a" style="left:1051px;top:657px;width:1px;height:17px;background:#c0c0c0;"></div>
<div class="a" style="left:1126px;top:657px;width:1px;height:17px;background:#c0c0c0;"></div>
<div class="a" style="left:1202px;top:657px;width:1px;height:17px;background:#c0c0c0;"></div>
<div class="a" style="left:1276px;top:657px;width:1px;height:17px;background:#c0c0c0;"></div>
<div class="a" style="left:47px;top:672px;width:53px;height:1px;background:#0000ff;"></div>
<div class="a" style="left:32px;top:675px;width:12px;height:18px;background:#fff;"></div>
<div class="a" style="left:45px;top:675px;width:1253px;height:17px;background:#fff;"></div>
<div class="a" style="left:32px;top:692px;width:1266px;height:1px;background:#d0d0d0;"></div>
<div class="a" style="left:45px;top:675px;width:1px;height:17px;background:#c0c0c0;"></div>
<div class="a" style="left:134px;top:675px;width:1px;height:17px;background:#c0c0c0;"></div>
<div class="a" style="left:173px;top:675px;width:1px;height:17px;background:#c0c0c0;"></div>
<div class="a" style="left:234px;top:675px;width:1px;height:17px;background:#c0c0c0;"></div>
<div class="a" style="left:414px;top:675px;width:1px;height:17px;background:#c0c0c0;"></div>
<div class="a" style="left:560px;top:675px;width:1px;height:17px;background:#c0c0c0;"></div>
<div class="a" style="left:592px;top:675px;width:1px;height:17px;background:#c0c0c0;"></div>
<div class="a" style="left:695px;top:675px;width:1px;height:17px;background:#c0c0c0;"></div>
<div class="a" style="left:805px;top:675px;width:1px;height:17px;background:#c0c0c0;"></div>
<div class="a" style="left:880px;top:675px;width:1px;height:17px;background:#c0c0c0;"></div>
<div class="a" style="left:991px;top:675px;width:1px;height:17px;background:#c0c0c0;"></div>
<div class="a" style="left:1051px;top:675px;width:1px;height:17px;background:#c0c0c0;"></div>
<div class="a" style="left:1126px;top:675px;width:1px;height:17px;background:#c0c0c0;"></div>
<div class="a" style="left:1202px;top:675px;width:1px;height:17px;background:#c0c0c0;"></div>
<div class="a" style="left:1276px;top:675px;width:1px;height:17px;background:#c0c0c0;"></div>
<div class="a" style="left:47px;top:690px;width:53px;height:1px;background:#0000ff;"></div>
<div class="a" style="left:32px;top:693px;width:12px;height:18px;background:#fff;"></div>
<div class="a" style="left:45px;top:693px;width:1253px;height:17px;background:#fff;"></div>
<div class="a" style="left:45px;top:694px;width:1253px;height:16px;background:#a6c8ef;"></div>
<div class="a" style="left:32px;top:710px;width:1266px;height:1px;background:#a8a8a8;"></div>
<div class="a" style="left:45px;top:693px;width:1px;height:17px;background:#c0c0c0;"></div>
<div class="a" style="left:134px;top:693px;width:1px;height:17px;background:#c0c0c0;"></div>
<div class="a" style="left:173px;top:693px;width:1px;height:17px;background:#c0c0c0;"></div>
<div class="a" style="left:234px;top:693px;width:1px;height:17px;background:#c0c0c0;"></div>
<div class="a" style="left:414px;top:693px;width:1px;height:17px;background:#c0c0c0;"></div>
<div class="a" style="left:560px;top:693px;width:1px;height:17px;background:#c0c0c0;"></div>
<div class="a" style="left:592px;top:693px;width:1px;height:17px;background:#c0c0c0;"></div>
<div class="a" style="left:695px;top:693px;width:1px;height:17px;background:#c0c0c0;"></div>
<div class="a" style="left:805px;top:693px;width:1px;height:17px;background:#c0c0c0;"></div>
<div class="a" style="left:880px;top:693px;width:1px;height:17px;background:#c0c0c0;"></div>
<div class="a" style="left:991px;top:693px;width:1px;height:17px;background:#c0c0c0;"></div>
<div class="a" style="left:1051px;top:693px;width:1px;height:17px;background:#c0c0c0;"></div>
<div class="a" style="left:1126px;top:693px;width:1px;height:17px;background:#c0c0c0;"></div>
<div class="a" style="left:1202px;top:693px;width:1px;height:17px;background:#c0c0c0;"></div>
<div class="a" style="left:1276px;top:693px;width:1px;height:17px;background:#c0c0c0;"></div>
<div class="a" style="left:47px;top:708px;width:53px;height:1px;background:#0000ff;"></div>
<div class="a" style="left:32px;top:711px;width:12px;height:18px;background:#fff;"></div>
<div class="a" style="left:45px;top:711px;width:1253px;height:17px;background:#fff;"></div>
<div class="a" style="left:32px;top:728px;width:1266px;height:1px;background:#d0d0d0;"></div>
<div class="a" style="left:45px;top:711px;width:1px;height:17px;background:#c0c0c0;"></div>
<div class="a" style="left:134px;top:711px;width:1px;height:17px;background:#c0c0c0;"></div>
<div class="a" style="left:173px;top:711px;width:1px;height:17px;background:#c0c0c0;"></div>
<div class="a" style="left:234px;top:711px;width:1px;height:17px;background:#c0c0c0;"></div>
<div class="a" style="left:414px;top:711px;width:1px;height:17px;background:#c0c0c0;"></div>
<div class="a" style="left:560px;top:711px;width:1px;height:17px;background:#c0c0c0;"></div>
<div class="a" style="left:592px;top:711px;width:1px;height:17px;background:#c0c0c0;"></div>
<div class="a" style="left:695px;top:711px;width:1px;height:17px;background:#c0c0c0;"></div>
<div class="a" style="left:805px;top:711px;width:1px;height:17px;background:#c0c0c0;"></div>
<div class="a" style="left:880px;top:711px;width:1px;height:17px;background:#c0c0c0;"></div>
<div class="a" style="left:991px;top:711px;width:1px;height:17px;background:#c0c0c0;"></div>
<div class="a" style="left:1051px;top:711px;width:1px;height:17px;background:#c0c0c0;"></div>
<div class="a" style="left:1126px;top:711px;width:1px;height:17px;background:#c0c0c0;"></div>
<div class="a" style="left:1202px;top:711px;width:1px;height:17px;background:#c0c0c0;"></div>
<div class="a" style="left:1276px;top:711px;width:1px;height:17px;background:#c0c0c0;"></div>
<div class="a" style="left:47px;top:726px;width:53px;height:1px;background:#0000ff;"></div>
<div class="a" style="left:32px;top:729px;width:12px;height:18px;background:#fff;"></div>
<div class="a" style="left:45px;top:729px;width:1253px;height:17px;background:#fff;"></div>
<div class="a" style="left:45px;top:730px;width:1253px;height:16px;background:#a6c8ef;"></div>
<div class="a" style="left:32px;top:746px;width:1266px;height:1px;background:#a8a8a8;"></div>
<div class="a" style="left:45px;top:729px;width:1px;height:17px;background:#c0c0c0;"></div>
<div class="a" style="left:134px;top:729px;width:1px;height:17px;background:#c0c0c0;"></div>
<div class="a" style="left:173px;top:729px;width:1px;height:17px;background:#c0c0c0;"></div>
<div class="a" style="left:234px;top:729px;width:1px;height:17px;background:#c0c0c0;"></div>
<div class="a" style="left:414px;top:729px;width:1px;height:17px;background:#c0c0c0;"></div>
<div class="a" style="left:560px;top:729px;width:1px;height:17px;background:#c0c0c0;"></div>
<div class="a" style="left:592px;top:729px;width:1px;height:17px;background:#c0c0c0;"></div>
<div class="a" style="left:695px;top:729px;width:1px;height:17px;background:#c0c0c0;"></div>
<div class="a" style="left:805px;top:729px;width:1px;height:17px;background:#c0c0c0;"></div>
<div class="a" style="left:880px;top:729px;width:1px;height:17px;background:#c0c0c0;"></div>
<div class="a" style="left:991px;top:729px;width:1px;height:17px;background:#c0c0c0;"></div>
<div class="a" style="left:1051px;top:729px;width:1px;height:17px;background:#c0c0c0;"></div>
<div class="a" style="left:1126px;top:729px;width:1px;height:17px;background:#c0c0c0;"></div>
<div class="a" style="left:1202px;top:729px;width:1px;height:17px;background:#c0c0c0;"></div>
<div class="a" style="left:1276px;top:729px;width:1px;height:17px;background:#c0c0c0;"></div>
<div class="a" style="left:47px;top:744px;width:53px;height:1px;background:#0000ff;"></div>
<div class="a" style="left:32px;top:747px;width:12px;height:18px;background:#fff;"></div>
<div class="a" style="left:45px;top:747px;width:1253px;height:17px;background:#fff;"></div>
<div class="a" style="left:32px;top:764px;width:1266px;height:1px;background:#d0d0d0;"></div>
<div class="a" style="left:45px;top:747px;width:1px;height:17px;background:#c0c0c0;"></div>
<div class="a" style="left:134px;top:747px;width:1px;height:17px;background:#c0c0c0;"></div>
<div class="a" style="left:173px;top:747px;width:1px;height:17px;background:#c0c0c0;"></div>
<div class="a" style="left:234px;top:747px;width:1px;height:17px;background:#c0c0c0;"></div>
<div class="a" style="left:414px;top:747px;width:1px;height:17px;background:#c0c0c0;"></div>
<div class="a" style="left:560px;top:747px;width:1px;height:17px;background:#c0c0c0;"></div>
<div class="a" style="left:592px;top:747px;width:1px;height:17px;background:#c0c0c0;"></div>
<div class="a" style="left:695px;top:747px;width:1px;height:17px;background:#c0c0c0;"></div>
<div class="a" style="left:805px;top:747px;width:1px;height:17px;background:#c0c0c0;"></div>
<div class="a" style="left:880px;top:747px;width:1px;height:17px;background:#c0c0c0;"></div>
<div class="a" style="left:991px;top:747px;width:1px;height:17px;background:#c0c0c0;"></div>
<div class="a" style="left:1051px;top:747px;width:1px;height:17px;background:#c0c0c0;"></div>
<div class="a" style="left:1126px;top:747px;width:1px;height:17px;background:#c0c0c0;"></div>
<div class="a" style="left:1202px;top:747px;width:1px;height:17px;background:#c0c0c0;"></div>
<div class="a" style="left:1276px;top:747px;width:1px;height:17px;background:#c0c0c0;"></div>
<div class="a" style="left:47px;top:762px;width:53px;height:1px;background:#0000ff;"></div>
<svg style="left:36px;top:571px" width="6" height="11" viewBox="0 0 6 11"><path d="M0 0L6 5.5L0 11Z" fill="#000"/></svg>
<div class="a" style="left:414px;top:567px;width:146px;height:17px;border:1px dotted #6a4a20;box-sizing:border-box;"></div>
<div class="a" style="left:1298px;top:547px;width:18px;height:230px;background:#f0f0f0;"></div>
<div class="a" style="left:1300px;top:565px;width:14px;height:101px;background:#cdcdcd;"></div>
<svg style="left:1302px;top:553px" width="9" height="6" viewBox="0 0 9 6"><path d="M0.8 5L4.5 1.2L8.2 5" fill="none" stroke="#505050" stroke-width="2"/></svg>
<svg style="left:1302px;top:766px" width="9" height="6" viewBox="0 0 9 6"><path d="M0.8 1L4.5 4.8L8.2 1" fill="none" stroke="#505050" stroke-width="2"/></svg>
<div class="a" style="left:32px;top:777px;width:1284px;height:18px;background:#f0f0f0;"></div>
<div class="a" style="left:32px;top:765px;width:1267px;height:1px;background:#fff;"></div>
<div class="a" style="left:32px;top:777px;width:1267px;height:1px;background:#fff;"></div>
<div class="a" style="left:1298px;top:765px;width:1px;height:13px;background:#fff;"></div>
<div class="a" style="left:32px;top:794px;width:1284px;height:1px;background:#fff;"></div>
<div class="a" style="left:1315px;top:547px;width:1px;height:248px;background:#fff;"></div>
<div class="a" style="left:50px;top:778px;width:17px;height:15px;background:#cdcdcd;"></div>
<svg style="left:38px;top:781px" width="6" height="9" viewBox="0 0 6 9"><path d="M5 0.8L1.2 4.5L5 8.2" fill="none" stroke="#505050" stroke-width="2"/></svg>
<svg style="left:1287px;top:781px" width="6" height="9" viewBox="0 0 6 9"><path d="M1 0.8L4.8 4.5L1 8.2" fill="none" stroke="#505050" stroke-width="2"/></svg>
<div class="a" style="left:5px;top:849px;width:1314px;height:23px;background:#fff;"></div>
<div class="a" style="left:5px;top:849px;width:6px;height:1px;background:#000;"></div>
<div class="a" style="left:74px;top:849px;width:1245px;height:1px;background:#000;"></div>
<div class="a" style="left:10px;top:849px;width:65px;height:21px;background:#fff;border-left:1px solid #000;border-bottom:1px solid #000;border-right:1px solid #000;box-sizing:border-box;"></div>
<div class="a" style="left:138px;top:852px;width:1px;height:16px;background:#a0a0a0;"></div>
<div class="a" style="left:220px;top:852px;width:1px;height:16px;background:#a0a0a0;"></div>
<div class="a" style="left:294px;top:852px;width:1px;height:16px;background:#a0a0a0;"></div>
<div class="a" style="left:354px;top:852px;width:1px;height:16px;background:#a0a0a0;"></div>
<div class="a" style="left:432px;top:852px;width:1px;height:16px;background:#a0a0a0;"></div>
<div class="a" style="left:562px;top:852px;width:1px;height:16px;background:#a0a0a0;"></div>
<div class="a" style="left:615px;top:852px;width:1px;height:16px;background:#a0a0a0;"></div>
<div class="a" style="left:700px;top:852px;width:1px;height:16px;background:#a0a0a0;"></div>
<div class="a" style="left:789px;top:852px;width:1px;height:16px;background:#a0a0a0;"></div>
<div class="a" style="left:5px;top:874px;width:539px;height:17px;border-top:1px solid #a0a0a0;border-left:1px solid #a0a0a0;border-bottom:1px solid #fff;border-right:1px solid #fff;box-sizing:border-box;"></div>
<div class="a" style="left:545px;top:874px;width:361px;height:17px;border-top:1px solid #a0a0a0;border-left:1px solid #a0a0a0;border-bottom:1px solid #fff;border-right:1px solid #fff;box-sizing:border-box;"></div>
<div class="a" style="left:908px;top:874px;width:272px;height:17px;border-top:1px solid #a0a0a0;border-left:1px solid #a0a0a0;border-bottom:1px solid #fff;border-right:1px solid #fff;box-sizing:border-box;"></div>
<div class="a" style="left:1182px;top:874px;width:136px;height:17px;border-top:1px solid #a0a0a0;border-left:1px solid #a0a0a0;border-bottom:1px solid #fff;border-right:1px solid #fff;box-sizing:border-box;"></div>
<div class="a" style="left:1px;top:894px;width:1320px;height:2px;background:#6a6a6a;"></div>
<div class="a" style="left:1px;top:896px;width:1320px;height:1px;background:#fafafa;"></div>
<div class="a" style="left:1px;top:897px;width:303px;height:20px;border-top:1px solid #a0a0a0;border-left:1px solid #a0a0a0;border-bottom:1px solid #fff;border-right:1px solid #fff;box-sizing:border-box;"></div>
<div class="a" style="left:305px;top:897px;width:1016px;height:20px;border-top:1px solid #a0a0a0;border-left:1px solid #a0a0a0;border-bottom:1px solid #fff;border-right:1px solid #fff;box-sizing:border-box;"></div>
<div class="a" style="left:0px;top:915px;width:1324px;height:2px;background:#6a6a6a;"></div>
<svg style="left:1309px;top:902px" width="13" height="13" viewBox="0 0 13 13"><path d="M12 1L1 12M12 5L5 12M12 9L9 12" stroke="#a8a8a8" stroke-width="1.2"/></svg>
<div class="t" style="left:30.40px;top:9.00px;font-size:12px;line-height:14px;color:#000;font-weight:normal;transform:scaleX(0.9286);transform-origin:left top;">HUBTRACKER-PG - Dr Dispatch 8.1.149 - POSTGRES@localhost [hubtracker]</div>
<div class="t" style="left:17.00px;top:37.00px;font-size:12px;line-height:14px;color:#000;font-weight:normal;transform:scaleX(0.9703);transform-origin:left top;">Dispatch</div>
<div class="t" style="left:79.30px;top:37.00px;font-size:12px;line-height:14px;color:#000;font-weight:normal;transform:scaleX(1.0195);transform-origin:left top;">Invoicing</div>
<div class="t" style="left:144.00px;top:37.00px;font-size:12px;line-height:14px;color:#000;font-weight:normal;transform:scaleX(0.9827);transform-origin:left top;">Payroll/Fueltax</div>
<div class="t" style="left:238.80px;top:37.00px;font-size:12px;line-height:14px;color:#000;font-weight:normal;transform:scaleX(0.9346);transform-origin:left top;">System</div>
<div class="t" style="left:293.00px;top:37.00px;font-size:12px;line-height:14px;color:#000;font-weight:normal;transform:scaleX(0.9843);transform-origin:left top;">Help</div>
<div class="t" style="left:41.00px;top:62.00px;font-size:16px;line-height:18px;color:#000;font-weight:normal;transform:scaleX(0.8962);transform-origin:left top;">Welcome</div>
<div class="t" style="left:287.40px;top:60.00px;font-size:16px;line-height:18px;color:#000;font-weight:normal;transform:scaleX(0.8896);transform-origin:left top;">Brokerage Dispatch</div>
<div class="t" style="left:17.00px;top:91.00px;font-size:12px;line-height:14px;color:#000;font-weight:normal;transform:scaleX(0.9366);transform-origin:left top;">Revenue</div>
<div class="t" style="left:74.00px;top:91.00px;font-size:12px;line-height:14px;color:#000;font-weight:normal;transform:scaleX(0.9517);transform-origin:left top;">Reports</div>
<div class="t" style="left:130.00px;top:91.00px;font-size:12px;line-height:14px;color:#000;font-weight:normal;transform:scaleX(0.9673);transform-origin:left top;">Load View</div>
<div class="t" style="left:200.00px;top:91.00px;font-size:12px;line-height:14px;color:#000;font-weight:normal;transform:scaleX(1.0085);transform-origin:left top;">Utilities</div>
<div class="t" style="left:260.40px;top:91.00px;font-size:12px;line-height:14px;color:#000;font-weight:normal;transform:scaleX(0.9913);transform-origin:left top;">Mileage Utilities</div>
<div class="t" style="left:360.70px;top:91.00px;font-size:12px;line-height:14px;color:#000;font-weight:normal;transform:scaleX(0.9265);transform-origin:left top;">Loads</div>
<div class="t" style="left:407.50px;top:91.00px;font-size:12px;line-height:14px;color:#000;font-weight:normal;transform:scaleX(1.0127);transform-origin:left top;">Help</div>
<div class="t" style="left:474.00px;top:91.00px;font-size:12px;line-height:14px;color:#000;font-weight:normal;transform:scaleX(0.9544);transform-origin:left top;">Tracking</div>
<div class="t" style="left:525.00px;top:91.00px;font-size:12px;line-height:14px;color:#000;font-weight:normal;transform:scaleX(0.9071);transform-origin:left top;">POD</div>
<div class="t" style="left:557.50px;top:91.00px;font-size:12px;line-height:14px;color:#000;font-weight:normal;transform:scaleX(0.9781);transform-origin:left top;">Claim</div>
<div class="t" style="left:596.50px;top:91.00px;font-size:12px;line-height:14px;color:#000;font-weight:normal;transform:scaleX(0.9615);transform-origin:left top;">Carrier Advances</div>
<div class="t" style="left:693.00px;top:91.00px;font-size:12px;line-height:14px;color:#000;font-weight:normal;">Equip Info</div>
<div class="t" style="left:755.00px;top:91.00px;font-size:12px;line-height:14px;color:#000;font-weight:normal;transform:scaleX(0.9933);transform-origin:left top;">Internet Posting</div>
<div class="t" style="left:847.00px;top:91.00px;font-size:12px;line-height:14px;color:#000;font-weight:normal;transform:scaleX(0.9406);transform-origin:left top;">Email Carriers</div>
<div class="t" style="left:36.60px;top:117.00px;font-size:12px;line-height:14px;color:#000;font-weight:normal;transform:scaleX(0.9744);transform-origin:left top;">New</div>
<div class="t" style="left:87.00px;top:117.00px;font-size:12px;line-height:14px;color:#000;font-weight:normal;transform:scaleX(0.9836);transform-origin:left top;">Print Forms</div>
<div class="t" style="left:175.00px;top:117.00px;font-size:12px;line-height:14px;color:#000;font-weight:normal;transform:scaleX(0.9639);transform-origin:left top;">Find</div>
<div class="t" style="left:205.60px;top:117.00px;font-size:12px;line-height:14px;color:#000;font-weight:normal;transform:scaleX(0.9162);transform-origin:left top;">Search Pro</div>
<div class="t" style="left:408.70px;top:117.00px;font-size:12px;line-height:14px;color:#8d8d8d;font-weight:normal;transform:scaleX(0.8699);transform-origin:left top;">Save</div>
<div class="t" style="left:460.00px;top:117.00px;font-size:12px;line-height:14px;color:#000;font-weight:normal;transform:scaleX(0.9369);transform-origin:left top;">Delete</div>
<div class="t" style="left:11.30px;top:142.00px;font-size:12.3px;line-height:14px;color:#000;font-weight:normal;transform:scaleX(1.0359);transform-origin:left top;">Brokerage - &lt;TAB&gt; key to move between fields</div>
<div class="t" style="left:10.30px;top:164.00px;font-size:12px;line-height:14px;color:#000;font-weight:normal;transform:scaleX(0.9716);transform-origin:left top;">Pro No</div>
<div class="t" style="left:32.28px;top:182.00px;font-size:12px;line-height:14px;color:#000;font-weight:normal;transform:scaleX(1.0146);transform-origin:right top;">1000024</div>
<div class="t" style="left:137.20px;top:200.00px;font-size:12.3px;line-height:14px;color:#ff0000;font-weight:normal;transform:scaleX(1.1727);transform-origin:left top;">Split Load Using Multiple Carriers</div>
<div class="t" style="left:100.40px;top:221.00px;font-size:12px;line-height:14px;color:#000;font-weight:normal;transform:scaleX(0.9720);transform-origin:left top;">4</div>
<div class="t" style="left:11.00px;top:239.00px;font-size:12px;line-height:14px;color:#000;font-weight:normal;transform:scaleX(1.0328);transform-origin:left top;">Template</div>
<div class="t" style="left:10.80px;top:276.00px;font-size:10.4px;line-height:12px;color:#000;font-weight:normal;transform:scaleX(0.9110);transform-origin:left top;">Dispatch Notes</div>
<div class="t" style="left:252.30px;top:267.00px;font-size:12px;line-height:14px;color:#000;font-weight:normal;transform:scaleX(0.9469);transform-origin:left top;">Driver</div>
<div class="t" style="left:253.20px;top:309.00px;font-size:12px;line-height:14px;color:#000;font-weight:normal;transform:scaleX(1.0226);transform-origin:left top;">Status</div>
<div class="t" style="left:257.30px;top:329.00px;font-size:12px;line-height:14px;color:#000;font-weight:normal;transform:scaleX(0.9519);transform-origin:left top;">Assigned</div>
<div class="t" style="left:253.00px;top:354.00px;font-size:12px;line-height:14px;color:#000;font-weight:normal;transform:scaleX(1.1437);transform-origin:left top;">On Time/Late</div>
<div class="t" style="left:382.00px;top:373.00px;font-size:14px;line-height:16px;color:#000;font-weight:bold;transform:scaleX(0.8571);transform-origin:left top;">···</div>
<div class="t" style="left:17.40px;top:407.00px;font-size:12px;line-height:14px;color:#000;font-weight:normal;transform:scaleX(0.9743);transform-origin:left top;">Driver's Cell #</div>
<div class="t" style="left:98.00px;top:407.00px;font-size:10px;line-height:12px;color:#8c8c8c;font-weight:normal;transform:scaleX(0.9143);transform-origin:left top;">Text Driver</div>
<div class="t" style="left:159.80px;top:407.00px;font-size:12px;line-height:14px;color:#000;font-weight:normal;transform:scaleX(1.0737);transform-origin:left top;">Trl/Cont #</div>
<div class="t" style="left:503.20px;top:200.00px;font-size:12px;line-height:14px;color:#000;font-weight:normal;transform:scaleX(0.8675);transform-origin:left top;">Tags</div>
<div class="t" style="left:447.00px;top:304.00px;font-size:12px;line-height:14px;color:#000;font-weight:normal;transform:scaleX(0.9433);transform-origin:left top;">HazMat</div>
<div class="t" style="left:447.00px;top:323.00px;font-size:12px;line-height:14px;color:#000;font-weight:normal;transform:scaleX(0.9496);transform-origin:left top;">Partial</div>
<div class="t" style="left:503.40px;top:235.00px;font-size:12px;line-height:14px;color:#000;font-weight:normal;transform:scaleX(0.8494);transform-origin:left top;">Red</div>
<div class="t" style="left:503.40px;top:253.00px;font-size:12px;line-height:14px;color:#000;font-weight:normal;transform:scaleX(0.8633);transform-origin:left top;">Green</div>
<div class="t" style="left:503.40px;top:271.00px;font-size:12px;line-height:14px;color:#000;font-weight:normal;transform:scaleX(0.8225);transform-origin:left top;">Pink</div>
<div class="t" style="left:686.60px;top:163.00px;font-size:12px;line-height:14px;color:#000;font-weight:normal;transform:scaleX(0.9824);transform-origin:left top;">Customer</div>
<div class="t" style="left:690.40px;top:182.00px;font-size:12px;line-height:14px;color:#000;font-weight:normal;transform:scaleX(0.9586);transform-origin:left top;">TEST CUSTOMER 321654</div>
<div class="t" style="left:811.00px;top:205.00px;font-size:12px;line-height:14px;color:#000;font-weight:normal;transform:scaleX(1.0540);transform-origin:left top;">(055)-123-4567</div>
<div class="t" style="left:811.00px;top:227.00px;font-size:12px;line-height:14px;color:#000;font-weight:normal;transform:scaleX(1.0745);transform-origin:left top;">( 78)-945-6</div>
<div class="t" style="left:790.30px;top:267.00px;font-size:12px;line-height:14px;color:#000;font-weight:normal;transform:scaleX(1.0162);transform-origin:left top;">Ref # (Billing)</div>
<div class="t" style="left:790.30px;top:309.00px;font-size:12px;line-height:14px;color:#000;font-weight:normal;transform:scaleX(1.1506);transform-origin:left top;">Dispatcher</div>
<div class="t" style="left:790.30px;top:354.00px;font-size:12px;line-height:14px;color:#000;font-weight:normal;transform:scaleX(1.1764);transform-origin:left top;">Broker/Agent</div>
<div class="t" style="left:790.30px;top:407.00px;font-size:12px;line-height:14px;color:#000;font-weight:normal;transform:scaleX(0.9105);transform-origin:left top;">Salesman</div>
<div class="t" style="left:793.50px;top:427.00px;font-size:12px;line-height:14px;color:#000;font-weight:normal;transform:scaleX(0.8717);transform-origin:left top;">BENDER</div>
<div class="t" style="left:1294.30px;top:166.00px;font-size:30px;line-height:34px;color:#1a8cff;font-weight:normal;transform:scaleX(0.7850);transform-origin:left top;">?</div>
<div class="t" style="left:997.20px;top:189.00px;font-size:12px;line-height:14px;color:#000;font-weight:normal;transform:scaleX(0.9426);transform-origin:left top;">Special</div>
<div class="t" style="left:997.20px;top:233.00px;font-size:12px;line-height:14px;color:#000;font-weight:normal;">Commodity</div>
<div class="t" style="left:997.20px;top:276.00px;font-size:12px;line-height:14px;color:#000;font-weight:normal;transform:scaleX(1.0231);transform-origin:left top;">Equipment</div>
<div class="t" style="left:1000.30px;top:296.00px;font-size:12px;line-height:14px;color:#000;font-weight:normal;transform:scaleX(0.8883);transform-origin:left top;">FLIP CHARGES</div>
<div class="t" style="left:997.20px;top:319.00px;font-size:12px;line-height:14px;color:#000;font-weight:normal;transform:scaleX(0.9475);transform-origin:left top;">Quickbooks Class</div>
<div class="t" style="left:1024.00px;top:373.00px;font-size:12px;line-height:14px;color:#ff0000;font-weight:normal;transform:scaleX(1.0430);transform-origin:left top;">Load Temp</div>
<div class="t" style="left:1204.40px;top:207.00px;font-size:12px;line-height:14px;color:#000;font-weight:normal;transform:scaleX(1.0194);transform-origin:left top;">Gross Pay</div>
<div class="t" style="left:1284.00px;top:224.00px;font-size:14px;line-height:16px;color:#000;font-weight:bold;transform:scaleX(0.9286);transform-origin:left top;">···</div>
<div class="t" style="left:1217.74px;top:225.00px;font-size:12.5px;line-height:14px;color:#000;font-weight:normal;">$13,288.20</div>
<div class="t" style="left:1204.40px;top:248.00px;font-size:12px;line-height:14px;color:#000;font-weight:normal;transform:scaleX(1.0744);transform-origin:left top;">Carrier Pay</div>
<div class="t" style="left:1284.00px;top:265.00px;font-size:14px;line-height:16px;color:#000;font-weight:bold;transform:scaleX(0.9286);transform-origin:left top;">···</div>
<div class="t" style="left:1249.02px;top:265.00px;font-size:12.5px;line-height:14px;color:#000;font-weight:normal;transform:scaleX(0.9910);transform-origin:right top;">$0.00</div>
<div class="t" style="left:1204.40px;top:288.00px;font-size:12px;line-height:14px;color:#000;font-weight:normal;transform:scaleX(1.0709);transform-origin:left top;">Brokerage</div>
<div class="t" style="left:1238.31px;top:306.00px;font-size:12.5px;line-height:14px;color:#000;font-weight:normal;">$13288.20</div>
<div class="t" style="left:1205.00px;top:332.00px;font-size:12px;line-height:14px;color:#000;font-weight:normal;transform:scaleX(1.0319);transform-origin:left top;">Profit Margin</div>
<div class="t" style="left:1192.10px;top:402.00px;font-size:12px;line-height:14px;color:#000;font-weight:normal;transform:scaleX(1.0744);transform-origin:left top;">Miles</div>
<div class="t" style="left:1293.11px;top:402.00px;font-size:12px;line-height:14px;color:#000;font-weight:normal;transform:scaleX(0.8972);transform-origin:right top;">0</div>
<div class="t" style="left:1148.00px;top:444.00px;font-size:13.5px;line-height:16px;color:#000;font-weight:normal;transform:scaleX(1.0733);transform-origin:left top;">Load Created 11/30/2022</div>
<div class="t" style="left:17.40px;top:490.00px;font-size:12px;line-height:14px;color:#000;font-weight:normal;transform:scaleX(0.9805);transform-origin:left top;">Pick/Drop</div>
<div class="t" style="left:79.30px;top:490.00px;font-size:12px;line-height:14px;color:#000;font-weight:normal;transform:scaleX(1.0197);transform-origin:left top;">Documents</div>
<div class="t" style="left:151.00px;top:490.00px;font-size:12px;line-height:14px;color:#000;font-weight:normal;transform:scaleX(1.0336);transform-origin:left top;">More...</div>
<div class="t" style="left:199.80px;top:490.00px;font-size:12px;line-height:14px;color:#000;font-weight:normal;transform:scaleX(0.9785);transform-origin:left top;">Load Splits</div>
<div class="t" style="left:297.80px;top:485.00px;font-size:12px;line-height:14px;color:#000;font-weight:normal;transform:scaleX(0.9720);transform-origin:left top;">5</div>
<div class="t" style="left:72.50px;top:519.00px;font-size:12px;line-height:14px;color:#000;font-weight:normal;transform:scaleX(0.9810);transform-origin:left top;">Update Miles</div>
<div class="t" style="left:204.40px;top:519.00px;font-size:12px;line-height:14px;color:#000;font-weight:normal;transform:scaleX(0.9724);transform-origin:left top;">Split Load</div>
<div class="t" style="left:321.30px;top:519.00px;font-size:12px;line-height:14px;color:#000;font-weight:normal;transform:scaleX(1.0310);transform-origin:left top;">Show Route</div>
<div class="t" style="left:444.00px;top:519.00px;font-size:12px;line-height:14px;color:#000;font-weight:normal;transform:scaleX(1.0450);transform-origin:left top;">Late/On-time</div>
<div class="t" style="left:1126.20px;top:521.00px;font-size:12px;line-height:14px;color:#000;font-weight:normal;transform:scaleX(1.0208);transform-origin:left top;">Stop</div>
<div class="t" style="left:1220.00px;top:521.00px;font-size:12px;line-height:14px;color:#000;font-weight:normal;transform:scaleX(1.0127);transform-origin:left top;">Stop</div>
<div class="t" style="left:47.20px;top:551.00px;font-size:12px;line-height:14px;color:#000;font-weight:normal;transform:scaleX(1.0256);transform-origin:left top;">More Info</div>
<div class="t" style="left:136.30px;top:551.00px;font-size:12px;line-height:14px;color:#000;font-weight:normal;">#</div>
<div class="t" style="left:176.00px;top:551.00px;font-size:12px;line-height:14px;color:#000;font-weight:normal;transform:scaleX(1.0412);transform-origin:left top;">Pick/...</div>
<div class="t" style="left:237.50px;top:551.00px;font-size:12px;line-height:14px;color:#000;font-weight:normal;">Facility</div>
<div class="t" style="left:417.00px;top:551.00px;font-size:12px;line-height:14px;color:#000;font-weight:normal;">City</div>
<div class="t" style="left:562.30px;top:551.00px;font-size:12px;line-height:14px;color:#000;font-weight:normal;">St</div>
<div class="t" style="left:595.20px;top:551.00px;font-size:12px;line-height:14px;color:#000;font-weight:normal;">Phone</div>
<div class="t" style="left:698.00px;top:551.00px;font-size:12px;line-height:14px;color:#000;font-weight:normal;">Pickup #</div>
<div class="t" style="left:808.00px;top:551.00px;font-size:12px;line-height:14px;color:#000;font-weight:normal;">Pieces</div>
<div class="t" style="left:883.00px;top:551.00px;font-size:12px;line-height:14px;color:#000;font-weight:normal;">Tot Cont Qty</div>
<div class="t" style="left:993.00px;top:551.00px;font-size:12px;line-height:14px;color:#000;font-weight:normal;">Wgt</div>
<div class="t" style="left:1054.00px;top:551.00px;font-size:12px;line-height:14px;color:#000;font-weight:normal;">Date</div>
<div class="t" style="left:1129.00px;top:551.00px;font-size:12px;line-height:14px;color:#000;font-weight:normal;">End Date</div>
<div class="t" style="left:1204.00px;top:551.00px;font-size:12px;line-height:14px;color:#000;font-weight:normal;">Time</div>
<div class="a" style="left:1277px;top:548px;width:21px;height:18px;overflow:hidden"><div class="t" style="left:2.00px;top:3.00px;font-size:12px;line-height:14px;color:#000;font-weight:normal;transform:scaleX(0.93);transform-origin:left top;">BOL</div></div>
<div class="t" style="left:47.20px;top:570.00px;font-size:12px;line-height:14px;color:#0000ff;font-weight:normal;transform:scaleX(0.9450);transform-origin:left top;">Click Here</div>
<div class="t" style="left:163.51px;top:570.00px;font-size:12px;line-height:14px;color:#000;font-weight:normal;transform:scaleX(1.0);transform-origin:right top;">1</div>
<div class="t" style="left:176.50px;top:570.00px;font-size:12px;line-height:14px;color:#000;font-weight:normal;transform:scaleX(1.0);transform-origin:left top;">D</div>
<div class="t" style="left:237.50px;top:570.00px;font-size:12px;line-height:14px;color:#000;font-weight:normal;transform:scaleX(1.02);transform-origin:left top;">2681 DANA AVE</div>
<div class="t" style="left:417.00px;top:570.00px;font-size:12px;line-height:14px;color:#000;font-weight:normal;transform:scaleX(0.96);transform-origin:left top;">BROWNSVILLE</div>
<div class="t" style="left:562.30px;top:570.00px;font-size:12px;line-height:14px;color:#000;font-weight:normal;transform:scaleX(0.96);transform-origin:left top;">TX</div>
<div class="t" style="left:595.60px;top:570.00px;font-size:12px;line-height:14px;color:#000;font-weight:normal;transform:scaleX(1.05);transform-origin:left top;">(956)312-1331</div>
<div class="t" style="left:808.00px;top:570.00px;font-size:12px;line-height:14px;color:#000;font-weight:normal;transform:scaleX(1.02);transform-origin:left top;">2</div>
<div class="t" style="left:1041.31px;top:570.00px;font-size:12px;line-height:14px;color:#000;font-weight:normal;">0</div>
<div class="t" style="left:47.20px;top:588.00px;font-size:12px;line-height:14px;color:#0000ff;font-weight:normal;transform:scaleX(0.9450);transform-origin:left top;">Click Here</div>
<div class="t" style="left:163.51px;top:588.00px;font-size:12px;line-height:14px;color:#000;font-weight:normal;transform:scaleX(1.0);transform-origin:right top;">2</div>
<div class="t" style="left:176.50px;top:588.00px;font-size:12px;line-height:14px;color:#000;font-weight:normal;transform:scaleX(1.0);transform-origin:left top;">P</div>
<div class="t" style="left:237.50px;top:588.00px;font-size:12px;line-height:14px;color:#000;font-weight:normal;transform:scaleX(1.02);transform-origin:left top;">24 HOUR FABRICATION</div>
<div class="t" style="left:417.00px;top:588.00px;font-size:12px;line-height:14px;color:#000;font-weight:normal;transform:scaleX(0.96);transform-origin:left top;">HOUSTON</div>
<div class="t" style="left:562.30px;top:588.00px;font-size:12px;line-height:14px;color:#000;font-weight:normal;transform:scaleX(0.96);transform-origin:left top;">TX</div>
<div class="t" style="left:1041.31px;top:588.00px;font-size:12px;line-height:14px;color:#000;font-weight:normal;">0</div>
<div class="t" style="left:47.20px;top:606.00px;font-size:12px;line-height:14px;color:#0000ff;font-weight:normal;transform:scaleX(0.9450);transform-origin:left top;">Click Here</div>
<div class="t" style="left:163.51px;top:606.00px;font-size:12px;line-height:14px;color:#000;font-weight:normal;transform:scaleX(1.0);transform-origin:right top;">3</div>
<div class="t" style="left:176.50px;top:606.00px;font-size:12px;line-height:14px;color:#000;font-weight:normal;transform:scaleX(1.0);transform-origin:left top;">D</div>
<div class="t" style="left:237.50px;top:606.00px;font-size:12px;line-height:14px;color:#000;font-weight:normal;transform:scaleX(1.02);transform-origin:left top;">2681 DANA AVE</div>
<div class="t" style="left:417.00px;top:606.00px;font-size:12px;line-height:14px;color:#000;font-weight:normal;transform:scaleX(0.96);transform-origin:left top;">BROWNSVILLE</div>
<div class="t" style="left:562.30px;top:606.00px;font-size:12px;line-height:14px;color:#000;font-weight:normal;transform:scaleX(0.96);transform-origin:left top;">TX</div>
<div class="t" style="left:595.60px;top:606.00px;font-size:12px;line-height:14px;color:#000;font-weight:normal;transform:scaleX(1.05);transform-origin:left top;">(956)312-1331</div>
<div class="t" style="left:1041.31px;top:606.00px;font-size:12px;line-height:14px;color:#000;font-weight:normal;">0</div>
<div class="t" style="left:47.20px;top:624.00px;font-size:12px;line-height:14px;color:#0000ff;font-weight:normal;transform:scaleX(0.9450);transform-origin:left top;">Click Here</div>
<div class="t" style="left:163.51px;top:624.00px;font-size:12px;line-height:14px;color:#000;font-weight:normal;transform:scaleX(1.0);transform-origin:right top;">4</div>
<div class="t" style="left:176.50px;top:624.00px;font-size:12px;line-height:14px;color:#000;font-weight:normal;transform:scaleX(1.0);transform-origin:left top;">P</div>
<div class="t" style="left:237.50px;top:624.00px;font-size:12px;line-height:14px;color:#000;font-weight:normal;transform:scaleX(1.02);transform-origin:left top;">24 HOUR FABRICATION</div>
<div class="t" style="left:417.00px;top:624.00px;font-size:12px;line-height:14px;color:#000;font-weight:normal;transform:scaleX(0.96);transform-origin:left top;">HOUSTON</div>
<div class="t" style="left:562.30px;top:624.00px;font-size:12px;line-height:14px;color:#000;font-weight:normal;transform:scaleX(0.96);transform-origin:left top;">TX</div>
<div class="t" style="left:808.00px;top:624.00px;font-size:12px;line-height:14px;color:#000;font-weight:normal;transform:scaleX(1.02);transform-origin:left top;">2</div>
<div class="t" style="left:1041.31px;top:624.00px;font-size:12px;line-height:14px;color:#000;font-weight:normal;">0</div>
<div class="t" style="left:47.20px;top:642.00px;font-size:12px;line-height:14px;color:#0000ff;font-weight:normal;transform:scaleX(0.9450);transform-origin:left top;">Click Here</div>
<div class="t" style="left:163.51px;top:642.00px;font-size:12px;line-height:14px;color:#000;font-weight:normal;transform:scaleX(1.0);transform-origin:right top;">5</div>
<div class="t" style="left:176.50px;top:642.00px;font-size:12px;line-height:14px;color:#000;font-weight:normal;transform:scaleX(1.0);transform-origin:left top;">D</div>
<div class="t" style="left:237.50px;top:642.00px;font-size:12px;line-height:14px;color:#000;font-weight:normal;transform:scaleX(0.96);transform-origin:left top;">TEST FACILITY</div>
<div class="t" style="left:417.00px;top:642.00px;font-size:12px;line-height:14px;color:#000;font-weight:normal;transform:scaleX(0.96);transform-origin:left top;">CHICAGO</div>
<div class="t" style="left:562.30px;top:642.00px;font-size:12px;line-height:14px;color:#000;font-weight:normal;transform:scaleX(0.96);transform-origin:left top;">IL</div>
<div class="t" style="left:595.60px;top:642.00px;font-size:12px;line-height:14px;color:#000;font-weight:normal;transform:scaleX(1.05);transform-origin:left top;">(    )    -</div>
<div class="t" style="left:1041.31px;top:642.00px;font-size:12px;line-height:14px;color:#000;font-weight:normal;">0</div>
<div class="t" style="left:47.20px;top:660.00px;font-size:12px;line-height:14px;color:#0000ff;font-weight:normal;transform:scaleX(0.9450);transform-origin:left top;">Click Here</div>
<div class="t" style="left:163.51px;top:660.00px;font-size:12px;line-height:14px;color:#000;font-weight:normal;transform:scaleX(1.0);transform-origin:right top;">6</div>
<div class="t" style="left:176.50px;top:660.00px;font-size:12px;line-height:14px;color:#000;font-weight:normal;transform:scaleX(1.0);transform-origin:left top;">D</div>
<div class="t" style="left:237.50px;top:660.00px;font-size:12px;line-height:14px;color:#000;font-weight:normal;transform:scaleX(1.02);transform-origin:left top;">2 TEST FACILITY</div>
<div class="t" style="left:417.00px;top:660.00px;font-size:12px;line-height:14px;color:#000;font-weight:normal;transform:scaleX(0.96);transform-origin:left top;">LOS ANGELES</div>
<div class="t" style="left:562.30px;top:660.00px;font-size:12px;line-height:14px;color:#000;font-weight:normal;transform:scaleX(0.96);transform-origin:left top;">CA</div>
<div class="t" style="left:595.60px;top:660.00px;font-size:12px;line-height:14px;color:#000;font-weight:normal;transform:scaleX(1.05);transform-origin:left top;">(    )    -</div>
<div class="t" style="left:1041.31px;top:660.00px;font-size:12px;line-height:14px;color:#000;font-weight:normal;">0</div>
<div class="t" style="left:47.20px;top:678.00px;font-size:12px;line-height:14px;color:#0000ff;font-weight:normal;transform:scaleX(0.9450);transform-origin:left top;">Click Here</div>
<div class="t" style="left:163.51px;top:678.00px;font-size:12px;line-height:14px;color:#000;font-weight:normal;transform:scaleX(1.0);transform-origin:right top;">7</div>
<div class="t" style="left:176.50px;top:678.00px;font-size:12px;line-height:14px;color:#000;font-weight:normal;transform:scaleX(1.0);transform-origin:left top;">P</div>
<div class="t" style="left:237.50px;top:678.00px;font-size:12px;line-height:14px;color:#000;font-weight:normal;transform:scaleX(0.96);transform-origin:left top;">YTILICAF TSET</div>
<div class="t" style="left:417.00px;top:678.00px;font-size:12px;line-height:14px;color:#000;font-weight:normal;transform:scaleX(0.96);transform-origin:left top;">DETROIT</div>
<div class="t" style="left:562.30px;top:678.00px;font-size:12px;line-height:14px;color:#000;font-weight:normal;transform:scaleX(0.96);transform-origin:left top;">MI</div>
<div class="t" style="left:595.60px;top:678.00px;font-size:12px;line-height:14px;color:#000;font-weight:normal;transform:scaleX(1.05);transform-origin:left top;">(    )    -</div>
<div class="t" style="left:1041.31px;top:678.00px;font-size:12px;line-height:14px;color:#000;font-weight:normal;">0</div>
<div class="t" style="left:47.20px;top:696.00px;font-size:12px;line-height:14px;color:#0000ff;font-weight:normal;transform:scaleX(0.9450);transform-origin:left top;">Click Here</div>
<div class="t" style="left:163.51px;top:696.00px;font-size:12px;line-height:14px;color:#000;font-weight:normal;transform:scaleX(1.0);transform-origin:right top;">8</div>
<div class="t" style="left:176.50px;top:696.00px;font-size:12px;line-height:14px;color:#000;font-weight:normal;transform:scaleX(1.0);transform-origin:left top;">P</div>
<div class="t" style="left:237.50px;top:696.00px;font-size:12px;line-height:14px;color:#000;font-weight:normal;transform:scaleX(1.02);transform-origin:left top;">2020 EXHIBITS</div>
<div class="t" style="left:417.00px;top:696.00px;font-size:12px;line-height:14px;color:#000;font-weight:normal;transform:scaleX(0.96);transform-origin:left top;">MISSOURI CITY</div>
<div class="t" style="left:562.30px;top:696.00px;font-size:12px;line-height:14px;color:#000;font-weight:normal;transform:scaleX(0.96);transform-origin:left top;">TX</div>
<div class="t" style="left:595.60px;top:696.00px;font-size:12px;line-height:14px;color:#000;font-weight:normal;transform:scaleX(1.05);transform-origin:left top;">(    )    -</div>
<div class="t" style="left:1041.31px;top:696.00px;font-size:12px;line-height:14px;color:#000;font-weight:normal;">0</div>
<div class="t" style="left:47.20px;top:714.00px;font-size:12px;line-height:14px;color:#0000ff;font-weight:normal;transform:scaleX(0.9450);transform-origin:left top;">Click Here</div>
<div class="t" style="left:163.51px;top:714.00px;font-size:12px;line-height:14px;color:#000;font-weight:normal;transform:scaleX(1.0);transform-origin:right top;">9</div>
<div class="t" style="left:176.50px;top:714.00px;font-size:12px;line-height:14px;color:#000;font-weight:normal;transform:scaleX(1.0);transform-origin:left top;">D</div>
<div class="t" style="left:237.50px;top:714.00px;font-size:12px;line-height:14px;color:#000;font-weight:normal;transform:scaleX(0.96);transform-origin:left top;">B-SIDE PLASTICS</div>
<div class="t" style="left:417.00px;top:714.00px;font-size:12px;line-height:14px;color:#000;font-weight:normal;transform:scaleX(0.96);transform-origin:left top;">PEARLAND</div>
<div class="t" style="left:562.30px;top:714.00px;font-size:12px;line-height:14px;color:#000;font-weight:normal;transform:scaleX(0.96);transform-origin:left top;">TX</div>
<div class="t" style="left:595.60px;top:714.00px;font-size:12px;line-height:14px;color:#000;font-weight:normal;transform:scaleX(1.05);transform-origin:left top;">(281)-489-4292</div>
<div class="t" style="left:1041.31px;top:714.00px;font-size:12px;line-height:14px;color:#000;font-weight:normal;">0</div>
<div class="t" style="left:47.20px;top:732.00px;font-size:12px;line-height:14px;color:#0000ff;font-weight:normal;transform:scaleX(0.9450);transform-origin:left top;">Click Here</div>
<div class="t" style="left:156.84px;top:732.00px;font-size:12px;line-height:14px;color:#000;font-weight:normal;transform:scaleX(1.0);transform-origin:right top;">10</div>
<div class="t" style="left:176.50px;top:732.00px;font-size:12px;line-height:14px;color:#000;font-weight:normal;transform:scaleX(1.0);transform-origin:left top;">P</div>
<div class="t" style="left:237.50px;top:732.00px;font-size:12px;line-height:14px;color:#000;font-weight:normal;transform:scaleX(0.96);transform-origin:left top;">B &amp; E RESOURCES</div>
<div class="t" style="left:417.00px;top:732.00px;font-size:12px;line-height:14px;color:#000;font-weight:normal;transform:scaleX(0.96);transform-origin:left top;">BUNA</div>
<div class="t" style="left:562.30px;top:732.00px;font-size:12px;line-height:14px;color:#000;font-weight:normal;transform:scaleX(0.96);transform-origin:left top;">TX</div>
<div class="t" style="left:1041.31px;top:732.00px;font-size:12px;line-height:14px;color:#000;font-weight:normal;">0</div>
<div class="t" style="left:47.20px;top:750.00px;font-size:12px;line-height:14px;color:#0000ff;font-weight:normal;transform:scaleX(0.9450);transform-origin:left top;">Click Here</div>
<div class="t" style="left:157.73px;top:750.00px;font-size:12px;line-height:14px;color:#000;font-weight:normal;transform:scaleX(1.0);transform-origin:right top;">11</div>
<div class="t" style="left:176.50px;top:750.00px;font-size:12px;line-height:14px;color:#000;font-weight:normal;transform:scaleX(1.0);transform-origin:left top;">P</div>
<div class="t" style="left:237.50px;top:750.00px;font-size:12px;line-height:14px;color:#000;font-weight:normal;transform:scaleX(0.96);transform-origin:left top;">C-B GEAR &amp; MACHINE</div>
<div class="t" style="left:417.00px;top:750.00px;font-size:12px;line-height:14px;color:#000;font-weight:normal;transform:scaleX(0.96);transform-origin:left top;">HOUSTON</div>
<div class="t" style="left:562.30px;top:750.00px;font-size:12px;line-height:14px;color:#000;font-weight:normal;transform:scaleX(0.96);transform-origin:left top;">TX</div>
<div class="t" style="left:595.60px;top:750.00px;font-size:12px;line-height:14px;color:#000;font-weight:normal;transform:scaleX(1.05);transform-origin:left top;">(281)-449-0777</div>
<div class="t" style="left:1041.31px;top:750.00px;font-size:12px;line-height:14px;color:#000;font-weight:normal;">0</div>
<div class="t" style="left:15.10px;top:803.00px;font-size:12px;line-height:14px;color:#ff0000;font-weight:normal;transform:scaleX(1.0792);transform-origin:left top;">N/A</div>
<div class="t" style="left:15.10px;top:822.00px;font-size:12px;line-height:14px;color:#000;font-weight:normal;transform:scaleX(1.1445);transform-origin:left top;">Last Check Call:</div>
<div class="t" style="left:1005.70px;top:805.00px;font-size:13.8px;line-height:16px;color:#3f8585;font-weight:bold;transform:scaleX(1.1945);transform-origin:left top;">Invoiced By Bestl/NB(11/30/2022)</div>
<div class="t" style="left:15.10px;top:853.00px;font-size:12px;line-height:14px;color:#000;font-weight:normal;transform:scaleX(1.1481);transform-origin:left top;">Dispatch</div>
<div class="t" style="left:79.30px;top:853.00px;font-size:12px;line-height:14px;color:#000;font-weight:normal;transform:scaleX(1.1409);transform-origin:left top;">Planning</div>
<div class="t" style="left:143.00px;top:853.00px;font-size:12px;line-height:14px;color:#000;font-weight:normal;transform:scaleX(1.1537);transform-origin:left top;">Load Board</div>
<div class="t" style="left:225.20px;top:853.00px;font-size:12px;line-height:14px;color:#000;font-weight:normal;transform:scaleX(1.1480);transform-origin:left top;">Templates</div>
<div class="t" style="left:299.20px;top:853.00px;font-size:12px;line-height:14px;color:#000;font-weight:normal;transform:scaleX(1.1460);transform-origin:left top;">Carriers</div>
<div class="t" style="left:359.00px;top:853.00px;font-size:12px;line-height:14px;color:#000;font-weight:normal;transform:scaleX(1.1549);transform-origin:left top;">Customers</div>
<div class="t" style="left:437.60px;top:853.00px;font-size:12px;line-height:14px;color:#000;font-weight:normal;transform:scaleX(1.1428);transform-origin:left top;">Shippers/Receivers</div>
<div class="t" style="left:567.00px;top:853.00px;font-size:12px;line-height:14px;color:#000;font-weight:normal;transform:scaleX(1.1149);transform-origin:left top;">Search</div>
<div class="t" style="left:620.00px;top:853.00px;font-size:12px;line-height:14px;color:#000;font-weight:normal;transform:scaleX(1.0783);transform-origin:left top;">Find-A-Truck</div>
<div class="t" style="left:705.00px;top:853.00px;font-size:12px;line-height:14px;color:#000;font-weight:normal;transform:scaleX(1.0729);transform-origin:left top;">LANE Search</div>
<div class="t" style="left:793.70px;top:853.00px;font-size:12px;line-height:14px;color:#000;font-weight:normal;transform:scaleX(1.1569);transform-origin:left top;">Loads To Work</div>
<div class="t" style="left:8.30px;top:877.00px;font-size:12px;line-height:14px;color:#000;font-weight:normal;transform:scaleX(1.1381);transform-origin:left top;">Filter Status = NORMAL (Not Closed)</div>
<div class="t" style="left:549.00px;top:877.00px;font-size:12px;line-height:14px;color:#000;font-weight:normal;transform:scaleX(1.1833);transform-origin:left top;">Load Count = 349</div>
<div class="t" style="left:911.20px;top:877.00px;font-size:12px;line-height:14px;color:#000;font-weight:normal;transform:scaleX(1.2201);transform-origin:left top;">23:50:18</div>
<div class="a" style="left:1182px;top:875px;width:135px;height:15px;overflow:hidden"><div class="t" style="left:3.00px;top:2.00px;font-size:12px;line-height:14px;color:#000;font-weight:normal;transform:scaleX(1.1201);transform-origin:left top;">PCMiler Online Engag</div></div>
</body></html>
